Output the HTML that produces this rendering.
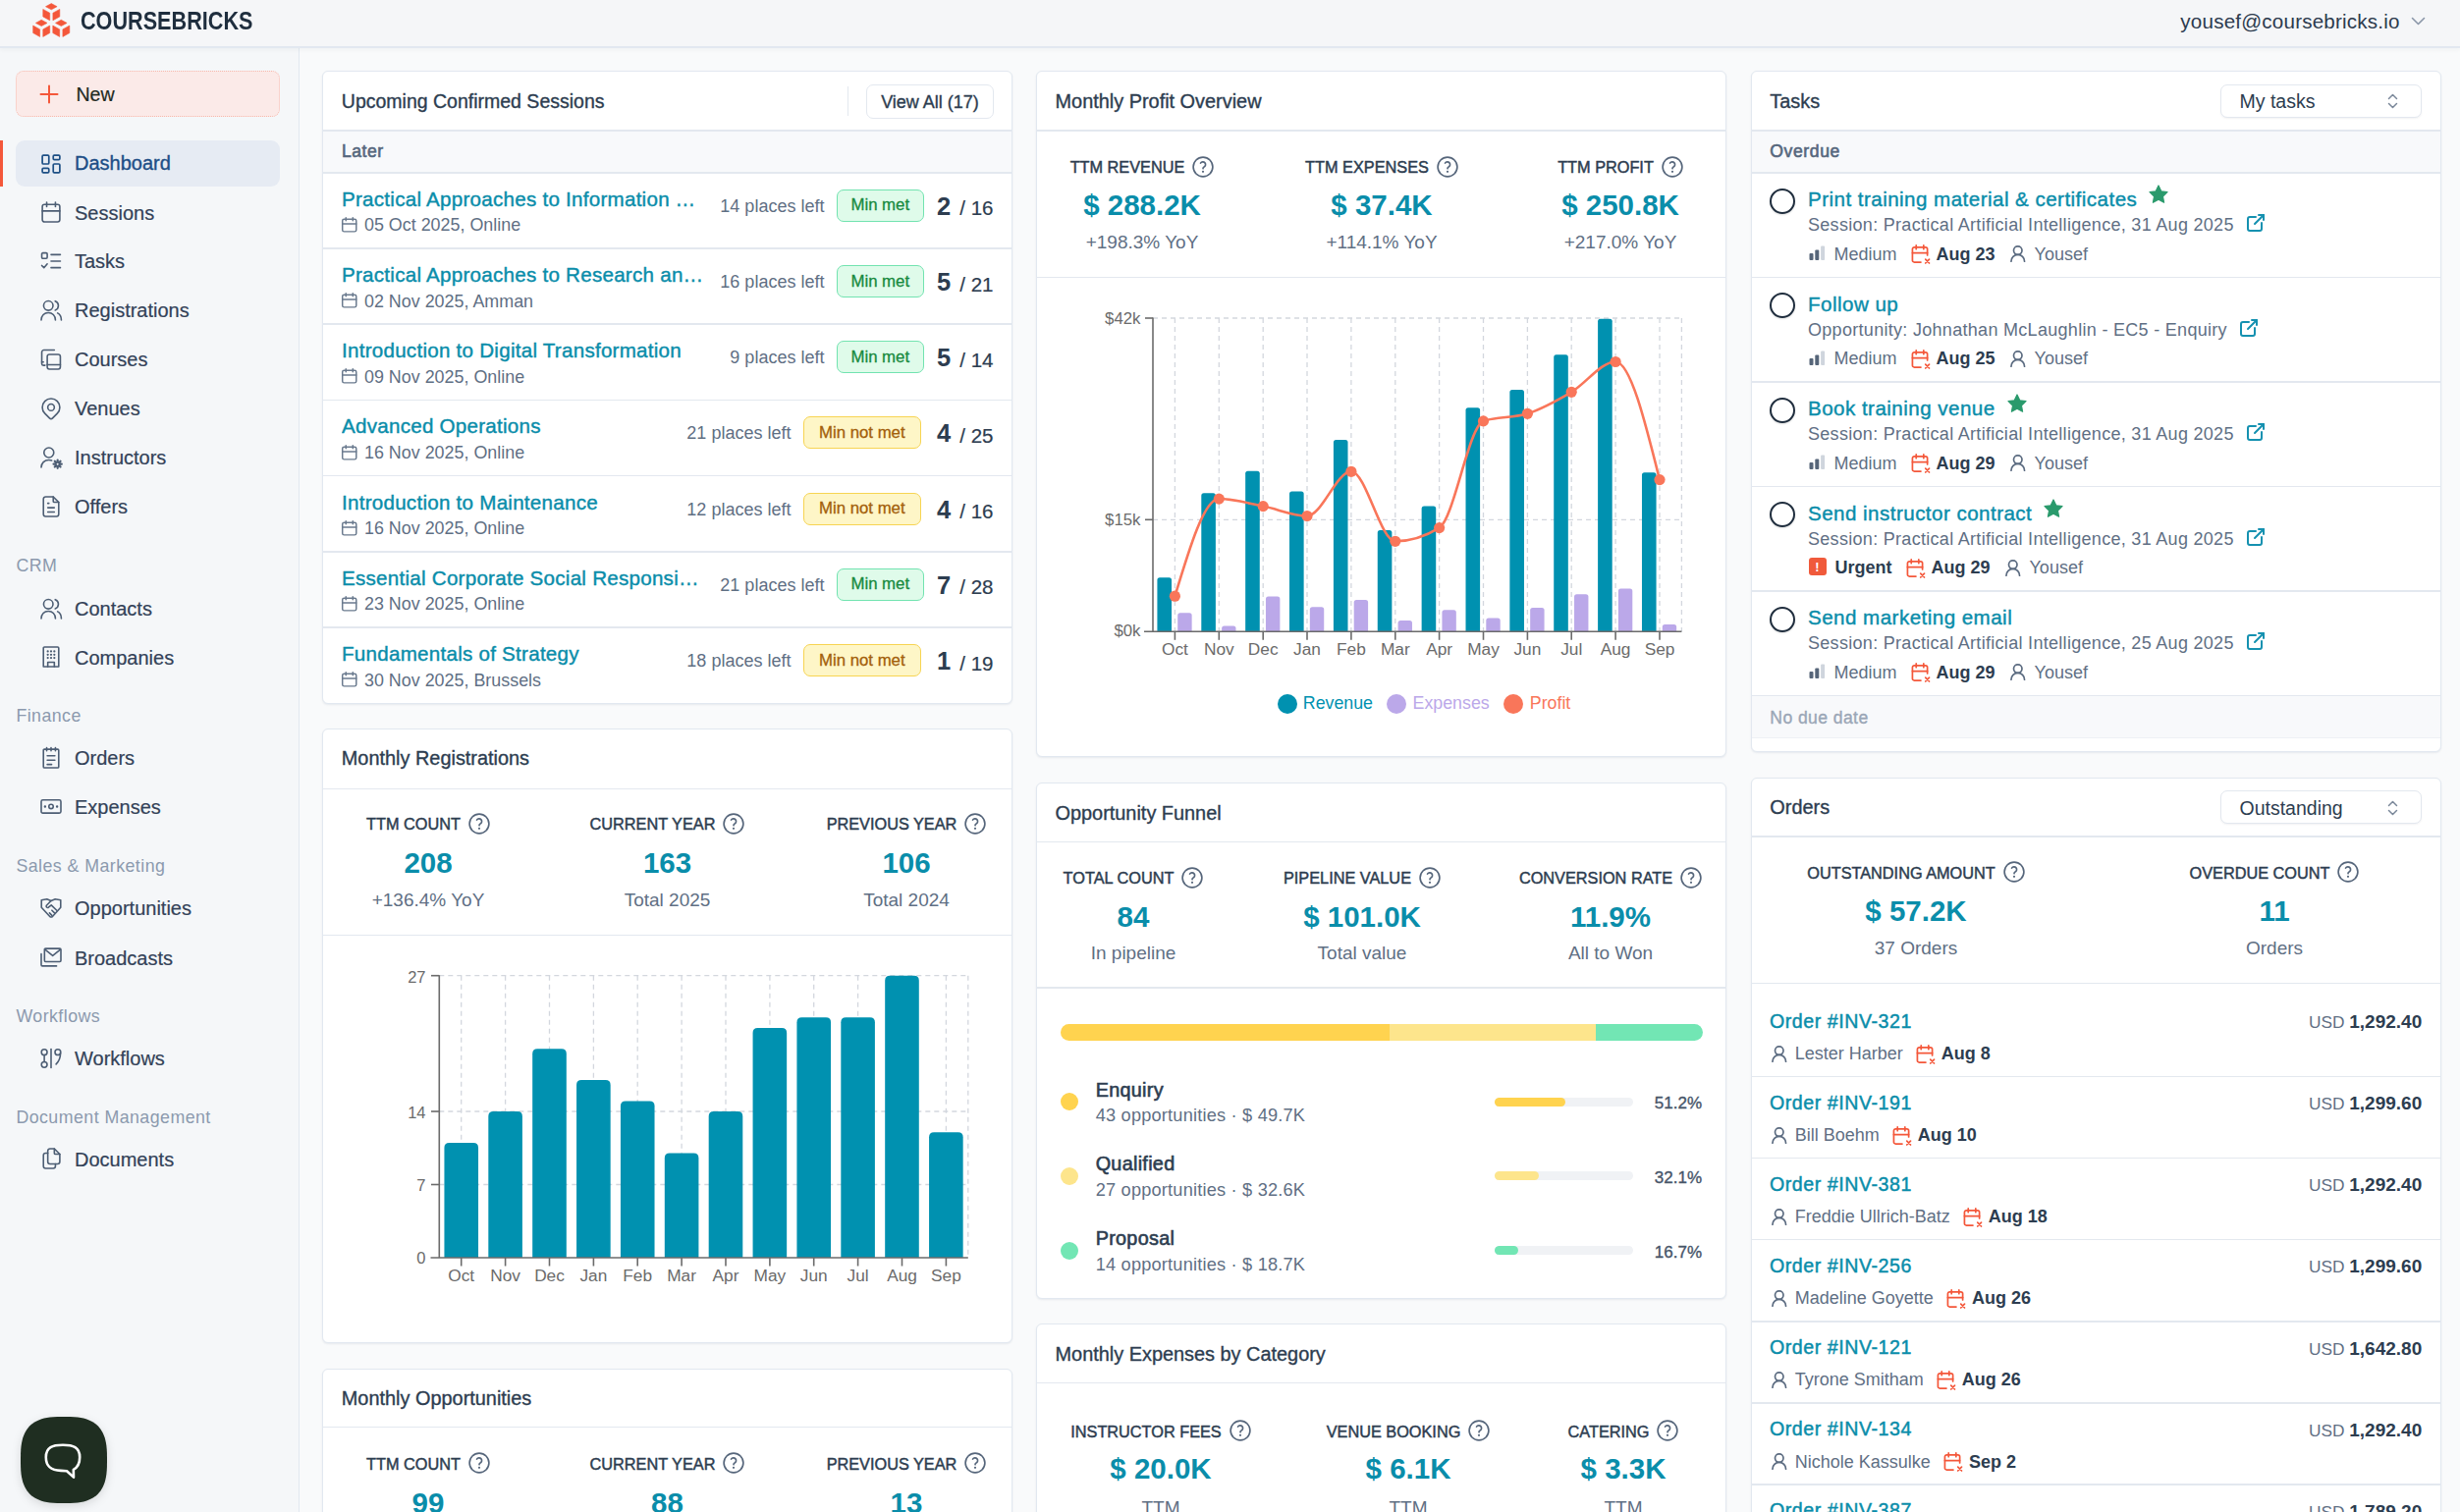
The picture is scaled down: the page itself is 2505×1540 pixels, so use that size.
<!DOCTYPE html><html><head><meta charset="utf-8"><style>
*{box-sizing:border-box;margin:0;padding:0}
html,body{width:2505px;height:1540px;overflow:hidden}
body{position:relative;background:#f9fafb;font-family:"Liberation Sans",sans-serif;color:#334155}
.a{position:absolute}
.t{position:absolute;line-height:1;white-space:nowrap}
svg{overflow:visible}
</style></head><body><div class="a" style="left:0px;top:0px;width:2505px;height:49px;background:#f5f6f8;border-bottom:2px solid #e2e8f0;box-shadow:0 2px 4px rgba(30,41,59,0.04);z-index:5"></div>
<svg class="a" style="left:0;top:0;z-index:6" width="80" height="42"><path d="M52.3,3.6 L58.099999999999994,6.7 L52.3,9.8 L46.5,6.7Z M43.8,9.4 L50.699999999999996,13.2 L50.699999999999996,20.700000000000003 L43.8,16.900000000000002Z M53.9,13.2 L60.8,9.4 L60.8,16.900000000000002 L53.9,20.700000000000003Z" fill="#f4573a" stroke="#f4573a" stroke-width="0.6" stroke-linejoin="round"/><path d="M42.2,20.3 L48.0,23.400000000000002 L42.2,26.5 L36.400000000000006,23.400000000000002Z M33.7,26.1 L40.6,29.9 L40.6,37.400000000000006 L33.7,33.6Z M43.800000000000004,29.9 L50.7,26.1 L50.7,33.6 L43.800000000000004,37.400000000000006Z" fill="#f4573a" stroke="#f4573a" stroke-width="0.6" stroke-linejoin="round"/><path d="M62.3,20.3 L68.1,23.400000000000002 L62.3,26.5 L56.5,23.400000000000002Z M53.8,26.1 L60.699999999999996,29.9 L60.699999999999996,37.400000000000006 L53.8,33.6Z M63.9,29.9 L70.8,26.1 L70.8,33.6 L63.9,37.400000000000006Z" fill="#f4573a" stroke="#f4573a" stroke-width="0.6" stroke-linejoin="round"/></svg>
<div class="t" style="left:82.0px;top:8.2px;font-size:26px;color:#1f2e3e;font-weight:700;transform:scaleX(0.832);transform-origin:0 0;z-index:6;letter-spacing:0px">COURSEBRICKS</div>
<div class="t" style="left:2043.7px;width:400px;text-align:right;top:12.1px;font-size:20.6px;color:#2d3b4e;font-weight:400;z-index:6;letter-spacing:0.2px">yousef@coursebricks.io</div>
<svg class="a" style="left:2455px;top:17px;z-index:6" width="15" height="9" viewBox="0 0 15 9"><path d="M1.5 1.5 L7.5 7.5 L13.5 1.5" fill="none" stroke="#8a96a8" stroke-width="1.6" stroke-linecap="round" stroke-linejoin="round"/></svg>
<div class="a" style="left:0px;top:47px;width:304.5px;height:1493px;background:#f5f7f9;border-right:1.5px solid #e1e8f0"></div>
<div class="a" style="left:16px;top:72px;width:269px;height:47px;background:#fbeae8;border:1.5px dotted #f7b9ad;border-radius:8px"></div>
<svg class="a" style="left:40px;top:86px;" width="20" height="20" viewBox="0 0 20 20"><path d="M10 1.5v17M1.5 10h17" stroke="#f4573a" stroke-width="2" stroke-linecap="round"/></svg>
<div class="t" style="left:77.4px;top:86.6px;font-size:19.6px;color:#1f2a22;font-weight:400;-webkit-text-stroke:0.2px #1f2a22;">New</div>
<div class="a" style="left:0px;top:143px;width:3px;height:47px;background:#f4573a"></div>
<div class="a" style="left:16px;top:143px;width:269px;height:47px;background:#e6ebf3;border-radius:9px"></div>
<svg class="a" style="left:41.5px;top:156.5px" width="20" height="20" viewBox="3 3 18 18" fill="none" stroke="#1d4f85" stroke-width="1.53" stroke-linecap="round" stroke-linejoin="round"><path d="M5 4h4a1 1 0 0 1 1 1v6a1 1 0 0 1 -1 1h-4a1 1 0 0 1 -1 -1v-6a1 1 0 0 1 1 -1"/><path d="M5 16h4a1 1 0 0 1 1 1v2a1 1 0 0 1 -1 1h-4a1 1 0 0 1 -1 -1v-2a1 1 0 0 1 1 -1"/><path d="M15 12h4a1 1 0 0 1 1 1v6a1 1 0 0 1 -1 1h-4a1 1 0 0 1 -1 -1v-6a1 1 0 0 1 1 -1"/><path d="M15 4h4a1 1 0 0 1 1 1v2a1 1 0 0 1 -1 1h-4a1 1 0 0 1 -1 -1v-2a1 1 0 0 1 1 -1"/></svg>
<div class="t" style="left:76.0px;top:156.1px;font-size:20px;color:#1d4e86;font-weight:400;-webkit-text-stroke:0.35px #1d4e86;">Dashboard</div>
<svg class="a" style="left:41.5px;top:206.4px" width="20" height="20" viewBox="3 3 18 18" fill="none" stroke="#4d5e74" stroke-width="1.44" stroke-linecap="round" stroke-linejoin="round"><path d="M4 7a2 2 0 0 1 2 -2h12a2 2 0 0 1 2 2v12a2 2 0 0 1 -2 2h-12a2 2 0 0 1 -2 -2v-12z"/><path d="M16 3v4"/><path d="M8 3v4"/><path d="M4 11h16"/></svg>
<div class="t" style="left:76.0px;top:206.7px;font-size:20px;color:#334258;font-weight:400;-webkit-text-stroke:0.2px #334258;">Sessions</div>
<svg class="a" style="left:41.5px;top:255.7px" width="20" height="20" viewBox="3 3 18 18" fill="none" stroke="#4d5e74" stroke-width="1.44" stroke-linecap="round" stroke-linejoin="round"><path d="M3.5 5.5a1 1 0 0 1 1 -1h3a1 1 0 0 1 1 1v3a1 1 0 0 1 -1 1h-3a1 1 0 0 1 -1 -1z"/><path d="M3.5 16l2 2l3 -3.5"/><path d="M12 6h8.5"/><path d="M12 12h8.5"/><path d="M12 18h8.5"/></svg>
<div class="t" style="left:76.0px;top:256.0px;font-size:20px;color:#334258;font-weight:400;-webkit-text-stroke:0.2px #334258;">Tasks</div>
<svg class="a" style="left:41.5px;top:305.90000000000003px" width="20" height="20" viewBox="3 3 18 18" fill="none" stroke="#4d5e74" stroke-width="1.44" stroke-linecap="round" stroke-linejoin="round"><circle cx="9.5" cy="7.8" r="4.3"/><path d="M3 21c0 -4.2 2.9 -6.8 6.5 -6.8s6.5 2.6 6.5 6.8"/><path d="M15.8 3.6c1.7 .6 2.9 2.2 2.9 4.2s-1.2 3.6 -2.9 4.2"/><path d="M18 14.6c2 1 3.4 3.2 3.4 6.4"/></svg>
<div class="t" style="left:76.0px;top:306.2px;font-size:20px;color:#334258;font-weight:400;-webkit-text-stroke:0.2px #334258;">Registrations</div>
<svg class="a" style="left:41.5px;top:355.8px" width="20" height="20" viewBox="3 3 18 18" fill="none" stroke="#4d5e74" stroke-width="1.44" stroke-linecap="round" stroke-linejoin="round"><path d="M15 3.5h-9.5a2 2 0 0 0 -2 2v10.5a1.5 1.5 0 0 0 1.5 1.5h1.5"/><path d="M3.5 14.5h1.5"/><path d="M10.5 7.5h8a2 2 0 0 1 2 2v9.5a2 2 0 0 1 -2 2h-8a2 2 0 0 1 -2 -2v-9.5a2 2 0 0 1 2 -2z"/><path d="M8.5 17h12"/></svg>
<div class="t" style="left:76.0px;top:356.1px;font-size:20px;color:#334258;font-weight:400;-webkit-text-stroke:0.2px #334258;">Courses</div>
<svg class="a" style="left:41.5px;top:406.0px" width="20" height="20" viewBox="3 3 18 18" fill="none" stroke="#4d5e74" stroke-width="1.44" stroke-linecap="round" stroke-linejoin="round"><path d="M9 11a3 3 0 1 0 6 0a3 3 0 0 0 -6 0"/><path d="M17.657 16.657l-4.243 4.243a2 2 0 0 1 -2.827 0l-4.244 -4.243a8 8 0 1 1 11.314 0z"/></svg>
<div class="t" style="left:76.0px;top:406.3px;font-size:20px;color:#334258;font-weight:400;-webkit-text-stroke:0.2px #334258;">Venues</div>
<svg class="a" style="left:41.5px;top:455.8px" width="20" height="20" viewBox="3 3 18 18" fill="none" stroke="#4d5e74" stroke-width="1.44" stroke-linecap="round" stroke-linejoin="round"><circle cx="10" cy="7.5" r="4.5"/><path d="M3 21c0 -4 3 -6.8 7 -6.8c1 0 1.8 .15 2.6 .45"/><circle cx="18" cy="18" r="1.6"/><path d="M18 14.3v1.2M18 20.5v1.2M21.7 18h-1.2M15.5 18h-1.2M20.6 15.4l-.85 .85M16.25 19.75l-.85 .85M20.6 20.6l-.85 -.85M16.25 16.25l-.85 -.85" stroke-width="2"/></svg>
<div class="t" style="left:76.0px;top:456.1px;font-size:20px;color:#334258;font-weight:400;-webkit-text-stroke:0.2px #334258;">Instructors</div>
<svg class="a" style="left:41.5px;top:506.00000000000006px" width="20" height="20" viewBox="3 3 18 18" fill="none" stroke="#4d5e74" stroke-width="1.44" stroke-linecap="round" stroke-linejoin="round"><path d="M14 3v4a1 1 0 0 0 1 1h4"/><path d="M17 21h-10a2 2 0 0 1 -2 -2v-14a2 2 0 0 1 2 -2h7l5 5v11a2 2 0 0 1 -2 2z"/><path d="M9 9h1"/><path d="M9 13h6"/><path d="M9 17h6"/></svg>
<div class="t" style="left:76.0px;top:506.3px;font-size:20px;color:#334258;font-weight:400;-webkit-text-stroke:0.2px #334258;">Offers</div>
<div class="t" style="left:16.4px;top:567.9px;font-size:17.8px;color:#8c9aae;font-weight:400;letter-spacing:0.45px">CRM</div>
<svg class="a" style="left:41.5px;top:609.8px" width="20" height="20" viewBox="3 3 18 18" fill="none" stroke="#4d5e74" stroke-width="1.44" stroke-linecap="round" stroke-linejoin="round"><circle cx="9.5" cy="7.8" r="4.3"/><path d="M3 21c0 -4.2 2.9 -6.8 6.5 -6.8s6.5 2.6 6.5 6.8"/><path d="M15.8 3.6c1.7 .6 2.9 2.2 2.9 4.2s-1.2 3.6 -2.9 4.2"/><path d="M18 14.6c2 1 3.4 3.2 3.4 6.4"/></svg>
<div class="t" style="left:76.0px;top:610.1px;font-size:20px;color:#334258;font-weight:400;-webkit-text-stroke:0.2px #334258;">Contacts</div>
<svg class="a" style="left:41.5px;top:659.3px" width="20" height="20" viewBox="3 3 18 18" fill="none" stroke="#4d5e74" stroke-width="1.44" stroke-linecap="round" stroke-linejoin="round"><path d="M5 4a1 1 0 0 1 1 -1h12a1 1 0 0 1 1 1v17h-14z"/><path d="M9 21v-4h6v4"/><path d="M9 7h.01M12 7h.01M15 7h.01M9 10h.01M12 10h.01M15 10h.01M9 13h.01M12 13h.01M15 13h.01" stroke-width="2"/></svg>
<div class="t" style="left:76.0px;top:659.6px;font-size:20px;color:#334258;font-weight:400;-webkit-text-stroke:0.2px #334258;">Companies</div>
<div class="t" style="left:16.4px;top:721.4px;font-size:17.8px;color:#8c9aae;font-weight:400;letter-spacing:0.45px">Finance</div>
<svg class="a" style="left:41.5px;top:761.8px" width="20" height="20" viewBox="3 3 18 18" fill="none" stroke="#4d5e74" stroke-width="1.44" stroke-linecap="round" stroke-linejoin="round"><path d="M5 5a1 1 0 0 1 1 -1h12a1 1 0 0 1 1 1v15a1 1 0 0 1 -1 1h-12a1 1 0 0 1 -1 -1z"/><path d="M8 2.5v3M12 2.5v3M16 2.5v3"/><path d="M8.5 10h7M8.5 14h7M8.5 18h4"/></svg>
<div class="t" style="left:76.0px;top:762.1px;font-size:20px;color:#334258;font-weight:400;-webkit-text-stroke:0.2px #334258;">Orders</div>
<svg class="a" style="left:41.5px;top:811.9px" width="20" height="20" viewBox="3 3 18 18" fill="none" stroke="#4d5e74" stroke-width="1.44" stroke-linecap="round" stroke-linejoin="round"><path d="M3 7a1.5 1.5 0 0 1 1.5 -1.5h15a1.5 1.5 0 0 1 1.5 1.5v9a1.5 1.5 0 0 1 -1.5 1.5h-15a1.5 1.5 0 0 1 -1.5 -1.5z"/><circle cx="12" cy="11.5" r="2"/><path d="M6.5 11.5h.01M17.5 11.5h.01" stroke-width="2.2"/></svg>
<div class="t" style="left:76.0px;top:812.2px;font-size:20px;color:#334258;font-weight:400;-webkit-text-stroke:0.2px #334258;">Expenses</div>
<div class="t" style="left:16.4px;top:874.3px;font-size:17.8px;color:#8c9aae;font-weight:400;letter-spacing:0.45px">Sales &amp; Marketing</div>
<svg class="a" style="left:41.5px;top:915.0999999999999px" width="20" height="20" viewBox="3 3 18 18" fill="none" stroke="#4d5e74" stroke-width="1.44" stroke-linecap="round" stroke-linejoin="round"><path d="M3.2 4.5l5 -0.8l3.8 1.6l3.8 -1.6l5 .8v6.8l-7.5 8.3a1.6 1.6 0 0 1 -2.4 0l-7.7 -8.3z"/><path d="M12 5.3l-4.2 4.2a1.3 1.3 0 0 0 1.8 1.8l2.6 -2.1l5 4.8"/><path d="M15.2 16.4l-2.4 -2.4M12.8 18.6l-2.2 -2.2"/></svg>
<div class="t" style="left:76.0px;top:915.4px;font-size:20px;color:#334258;font-weight:400;-webkit-text-stroke:0.2px #334258;">Opportunities</div>
<svg class="a" style="left:41.5px;top:965.3px" width="20" height="20" viewBox="3 3 18 18" fill="none" stroke="#4d5e74" stroke-width="1.44" stroke-linecap="round" stroke-linejoin="round"><path d="M7 4h13a1 1 0 0 1 1 1v10a1 1 0 0 1 -1 1h-13a1 1 0 0 1 -1 -1v-10a1 1 0 0 1 1 -1z"/><path d="M6.5 5l7 5.5l7 -5.5"/><path d="M3 9v10a1 1 0 0 0 1 1h13"/></svg>
<div class="t" style="left:76.0px;top:965.6px;font-size:20px;color:#334258;font-weight:400;-webkit-text-stroke:0.2px #334258;">Broadcasts</div>
<div class="t" style="left:16.4px;top:1026.9px;font-size:17.8px;color:#8c9aae;font-weight:400;letter-spacing:0.45px">Workflows</div>
<svg class="a" style="left:41.5px;top:1068.0px" width="20" height="20" viewBox="3 3 18 18" fill="none" stroke="#4d5e74" stroke-width="1.44" stroke-linecap="round" stroke-linejoin="round"><circle cx="5.8" cy="6.3" r="2.6"/><circle cx="5.8" cy="17.7" r="2.6"/><path d="M5.8 8.9v6.2"/><path d="M12 3.5v17"/><circle cx="18.2" cy="6.3" r="2.6"/><path d="M20.6 7.3c0 4 -1.5 7.5 -4 10"/></svg>
<div class="t" style="left:76.0px;top:1068.3px;font-size:20px;color:#334258;font-weight:400;-webkit-text-stroke:0.2px #334258;">Workflows</div>
<div class="t" style="left:16.4px;top:1130.1px;font-size:17.8px;color:#8c9aae;font-weight:400;letter-spacing:0.45px">Document Management</div>
<svg class="a" style="left:41.5px;top:1170.3999999999999px" width="20" height="20" viewBox="3 3 18 18" fill="none" stroke="#4d5e74" stroke-width="1.44" stroke-linecap="round" stroke-linejoin="round"><path d="M15 3v4a1 1 0 0 0 1 1h4"/><path d="M18 17h-7a2 2 0 0 1 -2 -2v-10a2 2 0 0 1 2 -2h4l5 5v7a2 2 0 0 1 -2 2z"/><path d="M16 17v2a2 2 0 0 1 -2 2h-7a2 2 0 0 1 -2 -2v-10a2 2 0 0 1 2 -2h2"/></svg>
<div class="t" style="left:76.0px;top:1170.7px;font-size:20px;color:#334258;font-weight:400;-webkit-text-stroke:0.2px #334258;">Documents</div>
<svg class="a" style="left:21px;top:1443px;filter:drop-shadow(0 3px 5px rgba(0,0,0,0.12))" width="88" height="88" viewBox="0 0 88 88"><path d="M88.00,44.00 L87.94,50.71 L87.74,54.80 L87.42,58.25 L86.96,61.32 L86.38,64.12 L85.66,66.69 L84.82,69.07 L83.84,71.28 L82.74,73.34 L81.51,75.25 L80.14,77.01 L78.65,78.65 L77.01,80.14 L75.25,81.51 L73.34,82.74 L71.28,83.84 L69.07,84.82 L66.69,85.66 L64.12,86.38 L61.32,86.96 L58.25,87.42 L54.80,87.74 L50.71,87.94 L44.00,88.00 L37.29,87.94 L33.20,87.74 L29.75,87.42 L26.68,86.96 L23.88,86.38 L21.31,85.66 L18.93,84.82 L16.72,83.84 L14.66,82.74 L12.75,81.51 L10.99,80.14 L9.35,78.65 L7.86,77.01 L6.49,75.25 L5.26,73.34 L4.16,71.28 L3.18,69.07 L2.34,66.69 L1.62,64.12 L1.04,61.32 L0.58,58.25 L0.26,54.80 L0.06,50.71 L0.00,44.00 L0.06,37.29 L0.26,33.20 L0.58,29.75 L1.04,26.68 L1.62,23.88 L2.34,21.31 L3.18,18.93 L4.16,16.72 L5.26,14.66 L6.49,12.75 L7.86,10.99 L9.35,9.35 L10.99,7.86 L12.75,6.49 L14.66,5.26 L16.72,4.16 L18.93,3.18 L21.31,2.34 L23.88,1.62 L26.68,1.04 L29.75,0.58 L33.20,0.26 L37.29,0.06 L44.00,0.00 L50.71,0.06 L54.80,0.26 L58.25,0.58 L61.32,1.04 L64.12,1.62 L66.69,2.34 L69.07,3.18 L71.28,4.16 L73.34,5.26 L75.25,6.49 L77.01,7.86 L78.65,9.35 L80.14,10.99 L81.51,12.75 L82.74,14.66 L83.84,16.72 L84.82,18.93 L85.66,21.31 L86.38,23.88 L86.96,26.68 L87.42,29.75 L87.74,33.20 L87.94,37.29Z" fill="#1f2e21"/></svg>
<svg class="a" style="left:45px;top:1470px;" width="38" height="38" viewBox="0 0 38 38"><path d="M19 1.8C8.5 1.8 1.8 3.8 1.8 14.2C1.8 23.8 7 27.4 17 27.9L23 28.2L30 34.6L29.8 26.8C34.3 24.4 36.2 21 36.2 14.2C36.2 3.8 29.5 1.8 19 1.8Z" fill="none" stroke="#fff" stroke-width="2.6" stroke-linejoin="round"/></svg>
<div class="a" style="left:328px;top:72px;width:703px;height:645px;background:#fff;border:1.5px solid #e2e8f0;border-radius:6px;box-shadow:0 1px 2px rgba(100,116,139,0.12)"></div>
<div class="t" style="left:347.8px;top:93.8px;font-size:19.5px;color:#2d3d50;font-weight:400;-webkit-text-stroke:0.35px #2d3d50;">Upcoming Confirmed Sessions</div>
<div class="a" style="left:863px;top:88px;width:1px;height:30px;background:#e3e8ef"></div>
<div class="a" style="left:882px;top:86px;width:130px;height:35px;background:#fff;border:1.5px solid #e3e8ef;border-radius:7px"></div>
<div class="t" style="left:882.0px;width:130px;text-align:center;top:94.5px;font-size:18px;color:#2d3d50;font-weight:400;-webkit-text-stroke:0.35px #2d3d50;">View All (17)</div>
<div class="a" style="left:329px;top:132.3px;width:701px;height:1.5px;background:#e3e8ef"></div>
<div class="a" style="left:329px;top:133.8px;width:701px;height:42px;background:#f8f9fb"></div>
<div class="t" style="left:348.0px;top:146.3px;font-size:17.6px;color:#56677d;font-weight:400;-webkit-text-stroke:0.6px #56677d;letter-spacing:0.5px">Later</div>
<div class="a" style="left:329px;top:175px;width:701px;height:1.5px;background:#e3e8ef"></div>
<div class="t" style="left:348.0px;top:192.8px;font-size:20.6px;color:#0a8daa;font-weight:400;-webkit-text-stroke:0.4px #0a8daa;letter-spacing:0.25px;width:370px;overflow:hidden;text-overflow:ellipsis;padding-bottom:5px">Practical Approaches to Information Technology</div>
<svg class="a" style="left:348px;top:221.0px" width="15.5" height="15.5" viewBox="3.2 2.2 17.6 19.6" preserveAspectRatio="none" fill="none" stroke="#6a7a8e" stroke-width="1.7" stroke-linecap="round" stroke-linejoin="round"><path d="M4 7a2 2 0 0 1 2 -2h12a2 2 0 0 1 2 2v12a2 2 0 0 1 -2 2h-12a2 2 0 0 1 -2 -2v-12z"/><path d="M16 3v4"/><path d="M8 3v4"/><path d="M4 11h16"/></svg>
<div class="t" style="left:371.0px;top:221.4px;font-size:17.9px;color:#5f6f84;font-weight:400;">05 Oct 2025, Online</div>
<div class="a" style="left:329px;top:252.2px;width:701px;height:1.5px;background:#e3e8ef"></div>
<div class="a" style="right:1493.5px;top:192.8px;height:33px;display:flex;align-items:center;white-space:nowrap"><span style="font-size:18px;color:#5f6f84;margin-right:12.5px;position:relative;top:1px">14 places left</span><span style="display:inline-flex;align-items:center;justify-content:center;height:33px;padding:0 13.5px;border:1.5px solid #72e3b0;background:#dffbea;border-radius:7px;font-size:16.8px;color:#178a3e;-webkit-text-stroke:0.3px #178a3e">Min met</span><span style="margin-left:13.5px;font-size:25.5px;font-weight:700;color:#2d3d50;position:relative;top:1px">2</span><span style="font-size:20.5px;color:#2d3d50;margin-left:9px;position:relative;top:3px;-webkit-text-stroke:0.2px #2d3d50">/ 16</span></div>
<div class="t" style="left:348.0px;top:270.0px;font-size:20.6px;color:#0a8daa;font-weight:400;-webkit-text-stroke:0.4px #0a8daa;letter-spacing:0.25px;width:370px;overflow:hidden;text-overflow:ellipsis;padding-bottom:5px">Practical Approaches to Research and Development</div>
<svg class="a" style="left:348px;top:298.2px" width="15.5" height="15.5" viewBox="3.2 2.2 17.6 19.6" preserveAspectRatio="none" fill="none" stroke="#6a7a8e" stroke-width="1.7" stroke-linecap="round" stroke-linejoin="round"><path d="M4 7a2 2 0 0 1 2 -2h12a2 2 0 0 1 2 2v12a2 2 0 0 1 -2 2h-12a2 2 0 0 1 -2 -2v-12z"/><path d="M16 3v4"/><path d="M8 3v4"/><path d="M4 11h16"/></svg>
<div class="t" style="left:371.0px;top:298.6px;font-size:17.9px;color:#5f6f84;font-weight:400;">02 Nov 2025, Amman</div>
<div class="a" style="left:329px;top:329.4px;width:701px;height:1.5px;background:#e3e8ef"></div>
<div class="a" style="right:1493.5px;top:270.0px;height:33px;display:flex;align-items:center;white-space:nowrap"><span style="font-size:18px;color:#5f6f84;margin-right:12.5px;position:relative;top:1px">16 places left</span><span style="display:inline-flex;align-items:center;justify-content:center;height:33px;padding:0 13.5px;border:1.5px solid #72e3b0;background:#dffbea;border-radius:7px;font-size:16.8px;color:#178a3e;-webkit-text-stroke:0.3px #178a3e">Min met</span><span style="margin-left:13.5px;font-size:25.5px;font-weight:700;color:#2d3d50;position:relative;top:1px">5</span><span style="font-size:20.5px;color:#2d3d50;margin-left:9px;position:relative;top:3px;-webkit-text-stroke:0.2px #2d3d50">/ 21</span></div>
<div class="t" style="left:348.0px;top:347.2px;font-size:20.6px;color:#0a8daa;font-weight:400;-webkit-text-stroke:0.4px #0a8daa;letter-spacing:0.25px;width:370px;overflow:hidden;text-overflow:ellipsis;padding-bottom:5px">Introduction to Digital Transformation</div>
<svg class="a" style="left:348px;top:375.4px" width="15.5" height="15.5" viewBox="3.2 2.2 17.6 19.6" preserveAspectRatio="none" fill="none" stroke="#6a7a8e" stroke-width="1.7" stroke-linecap="round" stroke-linejoin="round"><path d="M4 7a2 2 0 0 1 2 -2h12a2 2 0 0 1 2 2v12a2 2 0 0 1 -2 2h-12a2 2 0 0 1 -2 -2v-12z"/><path d="M16 3v4"/><path d="M8 3v4"/><path d="M4 11h16"/></svg>
<div class="t" style="left:371.0px;top:375.8px;font-size:17.9px;color:#5f6f84;font-weight:400;">09 Nov 2025, Online</div>
<div class="a" style="left:329px;top:406.59999999999997px;width:701px;height:1.5px;background:#e3e8ef"></div>
<div class="a" style="right:1493.5px;top:347.2px;height:33px;display:flex;align-items:center;white-space:nowrap"><span style="font-size:18px;color:#5f6f84;margin-right:12.5px;position:relative;top:1px">9 places left</span><span style="display:inline-flex;align-items:center;justify-content:center;height:33px;padding:0 13.5px;border:1.5px solid #72e3b0;background:#dffbea;border-radius:7px;font-size:16.8px;color:#178a3e;-webkit-text-stroke:0.3px #178a3e">Min met</span><span style="margin-left:13.5px;font-size:25.5px;font-weight:700;color:#2d3d50;position:relative;top:1px">5</span><span style="font-size:20.5px;color:#2d3d50;margin-left:9px;position:relative;top:3px;-webkit-text-stroke:0.2px #2d3d50">/ 14</span></div>
<div class="t" style="left:348.0px;top:424.4px;font-size:20.6px;color:#0a8daa;font-weight:400;-webkit-text-stroke:0.4px #0a8daa;letter-spacing:0.25px;width:370px;overflow:hidden;text-overflow:ellipsis;padding-bottom:5px">Advanced Operations</div>
<svg class="a" style="left:348px;top:452.6px" width="15.5" height="15.5" viewBox="3.2 2.2 17.6 19.6" preserveAspectRatio="none" fill="none" stroke="#6a7a8e" stroke-width="1.7" stroke-linecap="round" stroke-linejoin="round"><path d="M4 7a2 2 0 0 1 2 -2h12a2 2 0 0 1 2 2v12a2 2 0 0 1 -2 2h-12a2 2 0 0 1 -2 -2v-12z"/><path d="M16 3v4"/><path d="M8 3v4"/><path d="M4 11h16"/></svg>
<div class="t" style="left:371.0px;top:453.0px;font-size:17.9px;color:#5f6f84;font-weight:400;">16 Nov 2025, Online</div>
<div class="a" style="left:329px;top:483.8px;width:701px;height:1.5px;background:#e3e8ef"></div>
<div class="a" style="right:1493.5px;top:424.4px;height:33px;display:flex;align-items:center;white-space:nowrap"><span style="font-size:18px;color:#5f6f84;margin-right:12.5px;position:relative;top:1px">21 places left</span><span style="display:inline-flex;align-items:center;justify-content:center;height:33px;padding:0 15px;border:1.5px solid #f7d452;background:#fef6c7;border-radius:7px;font-size:16.8px;color:#a35f0b;-webkit-text-stroke:0.3px #a35f0b">Min not met</span><span style="margin-left:16.5px;font-size:25.5px;font-weight:700;color:#2d3d50;position:relative;top:1px">4</span><span style="font-size:20.5px;color:#2d3d50;margin-left:9px;position:relative;top:3px;-webkit-text-stroke:0.2px #2d3d50">/ 25</span></div>
<div class="t" style="left:348.0px;top:501.6px;font-size:20.6px;color:#0a8daa;font-weight:400;-webkit-text-stroke:0.4px #0a8daa;letter-spacing:0.25px;width:370px;overflow:hidden;text-overflow:ellipsis;padding-bottom:5px">Introduction to Maintenance</div>
<svg class="a" style="left:348px;top:529.8px" width="15.5" height="15.5" viewBox="3.2 2.2 17.6 19.6" preserveAspectRatio="none" fill="none" stroke="#6a7a8e" stroke-width="1.7" stroke-linecap="round" stroke-linejoin="round"><path d="M4 7a2 2 0 0 1 2 -2h12a2 2 0 0 1 2 2v12a2 2 0 0 1 -2 2h-12a2 2 0 0 1 -2 -2v-12z"/><path d="M16 3v4"/><path d="M8 3v4"/><path d="M4 11h16"/></svg>
<div class="t" style="left:371.0px;top:530.2px;font-size:17.9px;color:#5f6f84;font-weight:400;">16 Nov 2025, Online</div>
<div class="a" style="left:329px;top:561.0px;width:701px;height:1.5px;background:#e3e8ef"></div>
<div class="a" style="right:1493.5px;top:501.6px;height:33px;display:flex;align-items:center;white-space:nowrap"><span style="font-size:18px;color:#5f6f84;margin-right:12.5px;position:relative;top:1px">12 places left</span><span style="display:inline-flex;align-items:center;justify-content:center;height:33px;padding:0 15px;border:1.5px solid #f7d452;background:#fef6c7;border-radius:7px;font-size:16.8px;color:#a35f0b;-webkit-text-stroke:0.3px #a35f0b">Min not met</span><span style="margin-left:16.5px;font-size:25.5px;font-weight:700;color:#2d3d50;position:relative;top:1px">4</span><span style="font-size:20.5px;color:#2d3d50;margin-left:9px;position:relative;top:3px;-webkit-text-stroke:0.2px #2d3d50">/ 16</span></div>
<div class="t" style="left:348.0px;top:578.8px;font-size:20.6px;color:#0a8daa;font-weight:400;-webkit-text-stroke:0.4px #0a8daa;letter-spacing:0.25px;width:370px;overflow:hidden;text-overflow:ellipsis;padding-bottom:5px">Essential Corporate Social Responsibility</div>
<svg class="a" style="left:348px;top:607.0px" width="15.5" height="15.5" viewBox="3.2 2.2 17.6 19.6" preserveAspectRatio="none" fill="none" stroke="#6a7a8e" stroke-width="1.7" stroke-linecap="round" stroke-linejoin="round"><path d="M4 7a2 2 0 0 1 2 -2h12a2 2 0 0 1 2 2v12a2 2 0 0 1 -2 2h-12a2 2 0 0 1 -2 -2v-12z"/><path d="M16 3v4"/><path d="M8 3v4"/><path d="M4 11h16"/></svg>
<div class="t" style="left:371.0px;top:607.4px;font-size:17.9px;color:#5f6f84;font-weight:400;">23 Nov 2025, Online</div>
<div class="a" style="left:329px;top:638.2px;width:701px;height:1.5px;background:#e3e8ef"></div>
<div class="a" style="right:1493.5px;top:578.8px;height:33px;display:flex;align-items:center;white-space:nowrap"><span style="font-size:18px;color:#5f6f84;margin-right:12.5px;position:relative;top:1px">21 places left</span><span style="display:inline-flex;align-items:center;justify-content:center;height:33px;padding:0 13.5px;border:1.5px solid #72e3b0;background:#dffbea;border-radius:7px;font-size:16.8px;color:#178a3e;-webkit-text-stroke:0.3px #178a3e">Min met</span><span style="margin-left:13.5px;font-size:25.5px;font-weight:700;color:#2d3d50;position:relative;top:1px">7</span><span style="font-size:20.5px;color:#2d3d50;margin-left:9px;position:relative;top:3px;-webkit-text-stroke:0.2px #2d3d50">/ 28</span></div>
<div class="t" style="left:348.0px;top:656.0px;font-size:20.6px;color:#0a8daa;font-weight:400;-webkit-text-stroke:0.4px #0a8daa;letter-spacing:0.25px;width:370px;overflow:hidden;text-overflow:ellipsis;padding-bottom:5px">Fundamentals of Strategy</div>
<svg class="a" style="left:348px;top:684.2px" width="15.5" height="15.5" viewBox="3.2 2.2 17.6 19.6" preserveAspectRatio="none" fill="none" stroke="#6a7a8e" stroke-width="1.7" stroke-linecap="round" stroke-linejoin="round"><path d="M4 7a2 2 0 0 1 2 -2h12a2 2 0 0 1 2 2v12a2 2 0 0 1 -2 2h-12a2 2 0 0 1 -2 -2v-12z"/><path d="M16 3v4"/><path d="M8 3v4"/><path d="M4 11h16"/></svg>
<div class="t" style="left:371.0px;top:684.6px;font-size:17.9px;color:#5f6f84;font-weight:400;">30 Nov 2025, Brussels</div>
<div class="a" style="right:1493.5px;top:656.0px;height:33px;display:flex;align-items:center;white-space:nowrap"><span style="font-size:18px;color:#5f6f84;margin-right:12.5px;position:relative;top:1px">18 places left</span><span style="display:inline-flex;align-items:center;justify-content:center;height:33px;padding:0 15px;border:1.5px solid #f7d452;background:#fef6c7;border-radius:7px;font-size:16.8px;color:#a35f0b;-webkit-text-stroke:0.3px #a35f0b">Min not met</span><span style="margin-left:16.5px;font-size:25.5px;font-weight:700;color:#2d3d50;position:relative;top:1px">1</span><span style="font-size:20.5px;color:#2d3d50;margin-left:9px;position:relative;top:3px;-webkit-text-stroke:0.2px #2d3d50">/ 19</span></div>
<div class="a" style="left:328px;top:742px;width:703px;height:626px;background:#fff;border:1.5px solid #e2e8f0;border-radius:6px;box-shadow:0 1px 2px rgba(100,116,139,0.12)"></div>
<div class="t" style="left:347.8px;top:763.4px;font-size:19.9px;color:#2d3d50;font-weight:400;-webkit-text-stroke:0.35px #2d3d50;">Monthly Registrations</div>
<div class="a" style="left:329px;top:802.5px;width:701px;height:1.5px;background:#e3e8ef"></div>
<div class="a" style="left:186px;width:500px;top:831.3px;height:16.3px;display:flex;justify-content:center;align-items:center;white-space:nowrap;line-height:1"><span style="font-size:16.3px;letter-spacing:0px;color:#2d3d50;-webkit-text-stroke:0.45px #2d3d50">TTM COUNT</span><svg width="22" height="22" viewBox="0 0 24 24" style="margin-left:8px;position:relative;top:-0.5px;flex:none" fill="none" stroke="#56667b" stroke-width="1.8" stroke-linecap="round" stroke-linejoin="round"><circle cx="12" cy="12" r="10.8"/><path d="M12 17.3v.01" stroke-width="2.4"/><path d="M12 13.9a1.9 1.9 0 0 1 0.9 -1.7a3 3 0 1 0 -3.6 -4.4"/></svg></div>
<div class="t" style="left:236.0px;width:400px;text-align:center;top:864.0px;font-size:29.5px;color:#0a8daa;font-weight:700;">208</div>
<div class="t" style="left:236.0px;width:400px;text-align:center;top:907.1px;font-size:19px;color:#5f6f84;font-weight:400;">+136.4% YoY</div>
<div class="a" style="left:429.5px;width:500px;top:831.3px;height:16.3px;display:flex;justify-content:center;align-items:center;white-space:nowrap;line-height:1"><span style="font-size:16.3px;letter-spacing:0px;color:#2d3d50;-webkit-text-stroke:0.45px #2d3d50">CURRENT YEAR</span><svg width="22" height="22" viewBox="0 0 24 24" style="margin-left:8px;position:relative;top:-0.5px;flex:none" fill="none" stroke="#56667b" stroke-width="1.8" stroke-linecap="round" stroke-linejoin="round"><circle cx="12" cy="12" r="10.8"/><path d="M12 17.3v.01" stroke-width="2.4"/><path d="M12 13.9a1.9 1.9 0 0 1 0.9 -1.7a3 3 0 1 0 -3.6 -4.4"/></svg></div>
<div class="t" style="left:479.5px;width:400px;text-align:center;top:864.0px;font-size:29.5px;color:#0a8daa;font-weight:700;">163</div>
<div class="t" style="left:479.5px;width:400px;text-align:center;top:907.1px;font-size:19px;color:#5f6f84;font-weight:400;">Total 2025</div>
<div class="a" style="left:673px;width:500px;top:831.3px;height:16.3px;display:flex;justify-content:center;align-items:center;white-space:nowrap;line-height:1"><span style="font-size:16.3px;letter-spacing:0px;color:#2d3d50;-webkit-text-stroke:0.45px #2d3d50">PREVIOUS YEAR</span><svg width="22" height="22" viewBox="0 0 24 24" style="margin-left:8px;position:relative;top:-0.5px;flex:none" fill="none" stroke="#56667b" stroke-width="1.8" stroke-linecap="round" stroke-linejoin="round"><circle cx="12" cy="12" r="10.8"/><path d="M12 17.3v.01" stroke-width="2.4"/><path d="M12 13.9a1.9 1.9 0 0 1 0.9 -1.7a3 3 0 1 0 -3.6 -4.4"/></svg></div>
<div class="t" style="left:723.0px;width:400px;text-align:center;top:864.0px;font-size:29.5px;color:#0a8daa;font-weight:700;">106</div>
<div class="t" style="left:723.0px;width:400px;text-align:center;top:907.1px;font-size:19px;color:#5f6f84;font-weight:400;">Total 2024</div>
<div class="a" style="left:329px;top:951.7px;width:701px;height:1.5px;background:#e3e8ef"></div>
<svg class="a" style="left:0;top:0" width="2505" height="1540"><line x1="447.3" y1="993.7" x2="985.8" y2="993.7" stroke="#d3d7de" stroke-width="1.3" stroke-dasharray="5 4"/><line x1="447.3" y1="1132.0" x2="985.8" y2="1132.0" stroke="#d3d7de" stroke-width="1.3" stroke-dasharray="5 4"/><line x1="447.3" y1="1206.5" x2="985.8" y2="1206.5" stroke="#d3d7de" stroke-width="1.3" stroke-dasharray="5 4"/><line x1="469.7" y1="993.7" x2="469.7" y2="1281" stroke="#d3d7de" stroke-width="1.3" stroke-dasharray="5 4"/><line x1="514.6" y1="993.7" x2="514.6" y2="1281" stroke="#d3d7de" stroke-width="1.3" stroke-dasharray="5 4"/><line x1="559.5" y1="993.7" x2="559.5" y2="1281" stroke="#d3d7de" stroke-width="1.3" stroke-dasharray="5 4"/><line x1="604.4" y1="993.7" x2="604.4" y2="1281" stroke="#d3d7de" stroke-width="1.3" stroke-dasharray="5 4"/><line x1="649.2" y1="993.7" x2="649.2" y2="1281" stroke="#d3d7de" stroke-width="1.3" stroke-dasharray="5 4"/><line x1="694.1" y1="993.7" x2="694.1" y2="1281" stroke="#d3d7de" stroke-width="1.3" stroke-dasharray="5 4"/><line x1="739.0" y1="993.7" x2="739.0" y2="1281" stroke="#d3d7de" stroke-width="1.3" stroke-dasharray="5 4"/><line x1="783.9" y1="993.7" x2="783.9" y2="1281" stroke="#d3d7de" stroke-width="1.3" stroke-dasharray="5 4"/><line x1="828.7" y1="993.7" x2="828.7" y2="1281" stroke="#d3d7de" stroke-width="1.3" stroke-dasharray="5 4"/><line x1="873.6" y1="993.7" x2="873.6" y2="1281" stroke="#d3d7de" stroke-width="1.3" stroke-dasharray="5 4"/><line x1="918.5" y1="993.7" x2="918.5" y2="1281" stroke="#d3d7de" stroke-width="1.3" stroke-dasharray="5 4"/><line x1="963.4" y1="993.7" x2="963.4" y2="1281" stroke="#d3d7de" stroke-width="1.3" stroke-dasharray="5 4"/><line x1="985.8" y1="993.7" x2="985.8" y2="1281" stroke="#d3d7de" stroke-width="1.3" stroke-dasharray="5 4"/><path d="M452.44,1281.00 L452.44,1168.95 Q452.44,1163.95 457.44,1163.95 L482.04,1163.95 Q487.04,1163.95 487.04,1168.95 L487.04,1281.00Z" fill="#0091b0"/><path d="M497.31,1281.00 L497.31,1137.03 Q497.31,1132.03 502.31,1132.03 L526.91,1132.03 Q531.91,1132.03 531.91,1137.03 L531.91,1281.00Z" fill="#0091b0"/><path d="M542.19,1281.00 L542.19,1073.19 Q542.19,1068.19 547.19,1068.19 L571.79,1068.19 Q576.79,1068.19 576.79,1073.19 L576.79,1281.00Z" fill="#0091b0"/><path d="M587.06,1281.00 L587.06,1105.11 Q587.06,1100.11 592.06,1100.11 L616.66,1100.11 Q621.66,1100.11 621.66,1105.11 L621.66,1281.00Z" fill="#0091b0"/><path d="M631.94,1281.00 L631.94,1126.39 Q631.94,1121.39 636.94,1121.39 L661.54,1121.39 Q666.54,1121.39 666.54,1126.39 L666.54,1281.00Z" fill="#0091b0"/><path d="M676.81,1281.00 L676.81,1179.59 Q676.81,1174.59 681.81,1174.59 L706.41,1174.59 Q711.41,1174.59 711.41,1179.59 L711.41,1281.00Z" fill="#0091b0"/><path d="M721.69,1281.00 L721.69,1137.03 Q721.69,1132.03 726.69,1132.03 L751.29,1132.03 Q756.29,1132.03 756.29,1137.03 L756.29,1281.00Z" fill="#0091b0"/><path d="M766.56,1281.00 L766.56,1051.90 Q766.56,1046.90 771.56,1046.90 L796.16,1046.90 Q801.16,1046.90 801.16,1051.90 L801.16,1281.00Z" fill="#0091b0"/><path d="M811.44,1281.00 L811.44,1041.26 Q811.44,1036.26 816.44,1036.26 L841.04,1036.26 Q846.04,1036.26 846.04,1041.26 L846.04,1281.00Z" fill="#0091b0"/><path d="M856.31,1281.00 L856.31,1041.26 Q856.31,1036.26 861.31,1036.26 L885.91,1036.26 Q890.91,1036.26 890.91,1041.26 L890.91,1281.00Z" fill="#0091b0"/><path d="M901.19,1281.00 L901.19,998.70 Q901.19,993.70 906.19,993.70 L930.79,993.70 Q935.79,993.70 935.79,998.70 L935.79,1281.00Z" fill="#0091b0"/><path d="M946.06,1281.00 L946.06,1158.31 Q946.06,1153.31 951.06,1153.31 L975.66,1153.31 Q980.66,1153.31 980.66,1158.31 L980.66,1281.00Z" fill="#0091b0"/><line x1="447.3" y1="993.2" x2="447.3" y2="1281" stroke="#6b6b6b" stroke-width="1.6"/><line x1="438.5" y1="1281" x2="985.8" y2="1281" stroke="#6b6b6b" stroke-width="1.6"/><line x1="439" y1="993.7" x2="447.3" y2="993.7" stroke="#6b6b6b" stroke-width="1.6"/><line x1="439" y1="1132.0" x2="447.3" y2="1132.0" stroke="#6b6b6b" stroke-width="1.6"/><line x1="439" y1="1206.5" x2="447.3" y2="1206.5" stroke="#6b6b6b" stroke-width="1.6"/><line x1="469.7" y1="1281" x2="469.7" y2="1289.5" stroke="#6b6b6b" stroke-width="1.6"/><line x1="514.6" y1="1281" x2="514.6" y2="1289.5" stroke="#6b6b6b" stroke-width="1.6"/><line x1="559.5" y1="1281" x2="559.5" y2="1289.5" stroke="#6b6b6b" stroke-width="1.6"/><line x1="604.4" y1="1281" x2="604.4" y2="1289.5" stroke="#6b6b6b" stroke-width="1.6"/><line x1="649.2" y1="1281" x2="649.2" y2="1289.5" stroke="#6b6b6b" stroke-width="1.6"/><line x1="694.1" y1="1281" x2="694.1" y2="1289.5" stroke="#6b6b6b" stroke-width="1.6"/><line x1="739.0" y1="1281" x2="739.0" y2="1289.5" stroke="#6b6b6b" stroke-width="1.6"/><line x1="783.9" y1="1281" x2="783.9" y2="1289.5" stroke="#6b6b6b" stroke-width="1.6"/><line x1="828.7" y1="1281" x2="828.7" y2="1289.5" stroke="#6b6b6b" stroke-width="1.6"/><line x1="873.6" y1="1281" x2="873.6" y2="1289.5" stroke="#6b6b6b" stroke-width="1.6"/><line x1="918.5" y1="1281" x2="918.5" y2="1289.5" stroke="#6b6b6b" stroke-width="1.6"/><line x1="963.4" y1="1281" x2="963.4" y2="1289.5" stroke="#6b6b6b" stroke-width="1.6"/></svg>
<div class="t" style="left:373.5px;width:60px;text-align:right;top:987.0px;font-size:16.5px;color:#6b6b6b;font-weight:400;">27</div>
<div class="t" style="left:373.5px;width:60px;text-align:right;top:1124.5px;font-size:16.5px;color:#6b6b6b;font-weight:400;">14</div>
<div class="t" style="left:373.5px;width:60px;text-align:right;top:1199.0px;font-size:16.5px;color:#6b6b6b;font-weight:400;">7</div>
<div class="t" style="left:373.5px;width:60px;text-align:right;top:1273.2px;font-size:16.5px;color:#6b6b6b;font-weight:400;">0</div>
<div class="t" style="left:439.7px;width:60px;text-align:center;top:1290.7px;font-size:17.3px;color:#6b6b6b;font-weight:400;">Oct</div>
<div class="t" style="left:484.6px;width:60px;text-align:center;top:1290.7px;font-size:17.3px;color:#6b6b6b;font-weight:400;">Nov</div>
<div class="t" style="left:529.5px;width:60px;text-align:center;top:1290.7px;font-size:17.3px;color:#6b6b6b;font-weight:400;">Dec</div>
<div class="t" style="left:574.4px;width:60px;text-align:center;top:1290.7px;font-size:17.3px;color:#6b6b6b;font-weight:400;">Jan</div>
<div class="t" style="left:619.2px;width:60px;text-align:center;top:1290.7px;font-size:17.3px;color:#6b6b6b;font-weight:400;">Feb</div>
<div class="t" style="left:664.1px;width:60px;text-align:center;top:1290.7px;font-size:17.3px;color:#6b6b6b;font-weight:400;">Mar</div>
<div class="t" style="left:709.0px;width:60px;text-align:center;top:1290.7px;font-size:17.3px;color:#6b6b6b;font-weight:400;">Apr</div>
<div class="t" style="left:753.9px;width:60px;text-align:center;top:1290.7px;font-size:17.3px;color:#6b6b6b;font-weight:400;">May</div>
<div class="t" style="left:798.7px;width:60px;text-align:center;top:1290.7px;font-size:17.3px;color:#6b6b6b;font-weight:400;">Jun</div>
<div class="t" style="left:843.6px;width:60px;text-align:center;top:1290.7px;font-size:17.3px;color:#6b6b6b;font-weight:400;">Jul</div>
<div class="t" style="left:888.5px;width:60px;text-align:center;top:1290.7px;font-size:17.3px;color:#6b6b6b;font-weight:400;">Aug</div>
<div class="t" style="left:933.4px;width:60px;text-align:center;top:1290.7px;font-size:17.3px;color:#6b6b6b;font-weight:400;">Sep</div>
<div class="a" style="left:328px;top:1394px;width:703px;height:200px;background:#fff;border:1.5px solid #e2e8f0;border-radius:6px;box-shadow:0 1px 2px rgba(100,116,139,0.12)"></div>
<div class="t" style="left:347.8px;top:1415.2px;font-size:19.9px;color:#2d3d50;font-weight:400;-webkit-text-stroke:0.35px #2d3d50;">Monthly Opportunities</div>
<div class="a" style="left:329px;top:1452.6px;width:701px;height:1.5px;background:#e3e8ef"></div>
<div class="a" style="left:186px;width:500px;top:1482.8px;height:16.3px;display:flex;justify-content:center;align-items:center;white-space:nowrap;line-height:1"><span style="font-size:16.3px;letter-spacing:0px;color:#2d3d50;-webkit-text-stroke:0.45px #2d3d50">TTM COUNT</span><svg width="22" height="22" viewBox="0 0 24 24" style="margin-left:8px;position:relative;top:-0.5px;flex:none" fill="none" stroke="#56667b" stroke-width="1.8" stroke-linecap="round" stroke-linejoin="round"><circle cx="12" cy="12" r="10.8"/><path d="M12 17.3v.01" stroke-width="2.4"/><path d="M12 13.9a1.9 1.9 0 0 1 0.9 -1.7a3 3 0 1 0 -3.6 -4.4"/></svg></div>
<div class="t" style="left:236.0px;width:400px;text-align:center;top:1516.0px;font-size:29.5px;color:#0a8daa;font-weight:700;">99</div>
<div class="a" style="left:429.5px;width:500px;top:1482.8px;height:16.3px;display:flex;justify-content:center;align-items:center;white-space:nowrap;line-height:1"><span style="font-size:16.3px;letter-spacing:0px;color:#2d3d50;-webkit-text-stroke:0.45px #2d3d50">CURRENT YEAR</span><svg width="22" height="22" viewBox="0 0 24 24" style="margin-left:8px;position:relative;top:-0.5px;flex:none" fill="none" stroke="#56667b" stroke-width="1.8" stroke-linecap="round" stroke-linejoin="round"><circle cx="12" cy="12" r="10.8"/><path d="M12 17.3v.01" stroke-width="2.4"/><path d="M12 13.9a1.9 1.9 0 0 1 0.9 -1.7a3 3 0 1 0 -3.6 -4.4"/></svg></div>
<div class="t" style="left:479.5px;width:400px;text-align:center;top:1516.0px;font-size:29.5px;color:#0a8daa;font-weight:700;">88</div>
<div class="a" style="left:673px;width:500px;top:1482.8px;height:16.3px;display:flex;justify-content:center;align-items:center;white-space:nowrap;line-height:1"><span style="font-size:16.3px;letter-spacing:0px;color:#2d3d50;-webkit-text-stroke:0.45px #2d3d50">PREVIOUS YEAR</span><svg width="22" height="22" viewBox="0 0 24 24" style="margin-left:8px;position:relative;top:-0.5px;flex:none" fill="none" stroke="#56667b" stroke-width="1.8" stroke-linecap="round" stroke-linejoin="round"><circle cx="12" cy="12" r="10.8"/><path d="M12 17.3v.01" stroke-width="2.4"/><path d="M12 13.9a1.9 1.9 0 0 1 0.9 -1.7a3 3 0 1 0 -3.6 -4.4"/></svg></div>
<div class="t" style="left:723.0px;width:400px;text-align:center;top:1516.0px;font-size:29.5px;color:#0a8daa;font-weight:700;">13</div>
<div class="a" style="left:1055px;top:72px;width:703px;height:699px;background:#fff;border:1.5px solid #e2e8f0;border-radius:6px;box-shadow:0 1px 2px rgba(100,116,139,0.12)"></div>
<div class="t" style="left:1074.5px;top:93.5px;font-size:19.9px;color:#2d3d50;font-weight:400;-webkit-text-stroke:0.35px #2d3d50;">Monthly Profit Overview</div>
<div class="a" style="left:1056px;top:132.3px;width:701px;height:1.5px;background:#e3e8ef"></div>
<div class="a" style="left:913px;width:500px;top:161.9px;height:16.3px;display:flex;justify-content:center;align-items:center;white-space:nowrap;line-height:1"><span style="font-size:16.3px;letter-spacing:0px;color:#2d3d50;-webkit-text-stroke:0.45px #2d3d50">TTM REVENUE</span><svg width="22" height="22" viewBox="0 0 24 24" style="margin-left:8px;position:relative;top:-0.5px;flex:none" fill="none" stroke="#56667b" stroke-width="1.8" stroke-linecap="round" stroke-linejoin="round"><circle cx="12" cy="12" r="10.8"/><path d="M12 17.3v.01" stroke-width="2.4"/><path d="M12 13.9a1.9 1.9 0 0 1 0.9 -1.7a3 3 0 1 0 -3.6 -4.4"/></svg></div>
<div class="t" style="left:963.0px;width:400px;text-align:center;top:194.3px;font-size:29.5px;color:#0a8daa;font-weight:700;">$ 288.2K</div>
<div class="t" style="left:963.0px;width:400px;text-align:center;top:236.8px;font-size:19px;color:#5f6f84;font-weight:400;">+198.3% YoY</div>
<div class="a" style="left:1157px;width:500px;top:161.9px;height:16.3px;display:flex;justify-content:center;align-items:center;white-space:nowrap;line-height:1"><span style="font-size:16.3px;letter-spacing:0px;color:#2d3d50;-webkit-text-stroke:0.45px #2d3d50">TTM EXPENSES</span><svg width="22" height="22" viewBox="0 0 24 24" style="margin-left:8px;position:relative;top:-0.5px;flex:none" fill="none" stroke="#56667b" stroke-width="1.8" stroke-linecap="round" stroke-linejoin="round"><circle cx="12" cy="12" r="10.8"/><path d="M12 17.3v.01" stroke-width="2.4"/><path d="M12 13.9a1.9 1.9 0 0 1 0.9 -1.7a3 3 0 1 0 -3.6 -4.4"/></svg></div>
<div class="t" style="left:1207.0px;width:400px;text-align:center;top:194.3px;font-size:29.5px;color:#0a8daa;font-weight:700;">$ 37.4K</div>
<div class="t" style="left:1207.0px;width:400px;text-align:center;top:236.8px;font-size:19px;color:#5f6f84;font-weight:400;">+114.1% YoY</div>
<div class="a" style="left:1400px;width:500px;top:161.9px;height:16.3px;display:flex;justify-content:center;align-items:center;white-space:nowrap;line-height:1"><span style="font-size:16.3px;letter-spacing:0px;color:#2d3d50;-webkit-text-stroke:0.45px #2d3d50">TTM PROFIT</span><svg width="22" height="22" viewBox="0 0 24 24" style="margin-left:8px;position:relative;top:-0.5px;flex:none" fill="none" stroke="#56667b" stroke-width="1.8" stroke-linecap="round" stroke-linejoin="round"><circle cx="12" cy="12" r="10.8"/><path d="M12 17.3v.01" stroke-width="2.4"/><path d="M12 13.9a1.9 1.9 0 0 1 0.9 -1.7a3 3 0 1 0 -3.6 -4.4"/></svg></div>
<div class="t" style="left:1450.0px;width:400px;text-align:center;top:194.3px;font-size:29.5px;color:#0a8daa;font-weight:700;">$ 250.8K</div>
<div class="t" style="left:1450.0px;width:400px;text-align:center;top:236.8px;font-size:19px;color:#5f6f84;font-weight:400;">+217.0% YoY</div>
<div class="a" style="left:1056px;top:281.5px;width:701px;height:1.5px;background:#e3e8ef"></div>
<svg class="a" style="left:0;top:0" width="2505" height="1540"><line x1="1174" y1="324.0" x2="1712.4" y2="324.0" stroke="#d3d7de" stroke-width="1.3" stroke-dasharray="5 4"/><line x1="1174" y1="529.3" x2="1712.4" y2="529.3" stroke="#d3d7de" stroke-width="1.3" stroke-dasharray="5 4"/><line x1="1196.4" y1="324" x2="1196.4" y2="643.3" stroke="#d3d7de" stroke-width="1.3" stroke-dasharray="5 4"/><line x1="1241.3" y1="324" x2="1241.3" y2="643.3" stroke="#d3d7de" stroke-width="1.3" stroke-dasharray="5 4"/><line x1="1286.2" y1="324" x2="1286.2" y2="643.3" stroke="#d3d7de" stroke-width="1.3" stroke-dasharray="5 4"/><line x1="1331.0" y1="324" x2="1331.0" y2="643.3" stroke="#d3d7de" stroke-width="1.3" stroke-dasharray="5 4"/><line x1="1375.9" y1="324" x2="1375.9" y2="643.3" stroke="#d3d7de" stroke-width="1.3" stroke-dasharray="5 4"/><line x1="1420.8" y1="324" x2="1420.8" y2="643.3" stroke="#d3d7de" stroke-width="1.3" stroke-dasharray="5 4"/><line x1="1465.6" y1="324" x2="1465.6" y2="643.3" stroke="#d3d7de" stroke-width="1.3" stroke-dasharray="5 4"/><line x1="1510.5" y1="324" x2="1510.5" y2="643.3" stroke="#d3d7de" stroke-width="1.3" stroke-dasharray="5 4"/><line x1="1555.4" y1="324" x2="1555.4" y2="643.3" stroke="#d3d7de" stroke-width="1.3" stroke-dasharray="5 4"/><line x1="1600.2" y1="324" x2="1600.2" y2="643.3" stroke="#d3d7de" stroke-width="1.3" stroke-dasharray="5 4"/><line x1="1645.1" y1="324" x2="1645.1" y2="643.3" stroke="#d3d7de" stroke-width="1.3" stroke-dasharray="5 4"/><line x1="1690.0" y1="324" x2="1690.0" y2="643.3" stroke="#d3d7de" stroke-width="1.3" stroke-dasharray="5 4"/><line x1="1712.4" y1="324" x2="1712.4" y2="643.3" stroke="#d3d7de" stroke-width="1.3" stroke-dasharray="5 4"/><path d="M1178.43,643.30 L1178.43,590.68 Q1178.43,588.18 1180.93,588.18 L1190.53,588.18 Q1193.03,588.18 1193.03,590.68 L1193.03,643.30Z" fill="#0091b0"/><path d="M1199.23,643.30 L1199.23,626.79 Q1199.23,624.29 1201.73,624.29 L1211.13,624.29 Q1213.63,624.29 1213.63,626.79 L1213.63,643.30Z" fill="#bba8e9"/><path d="M1223.30,643.30 L1223.30,504.78 Q1223.30,502.28 1225.80,502.28 L1235.40,502.28 Q1237.90,502.28 1237.90,504.78 L1237.90,643.30Z" fill="#0091b0"/><path d="M1244.10,643.30 L1244.10,640.02 Q1244.10,637.52 1246.60,637.52 L1256.00,637.52 Q1258.50,637.52 1258.50,640.02 L1258.50,643.30Z" fill="#bba8e9"/><path d="M1268.17,643.30 L1268.17,482.35 Q1268.17,479.85 1270.67,479.85 L1280.27,479.85 Q1282.77,479.85 1282.77,482.35 L1282.77,643.30Z" fill="#0091b0"/><path d="M1288.97,643.30 L1288.97,610.07 Q1288.97,607.57 1291.47,607.57 L1300.87,607.57 Q1303.37,607.57 1303.37,610.07 L1303.37,643.30Z" fill="#bba8e9"/><path d="M1313.03,643.30 L1313.03,502.88 Q1313.03,500.38 1315.53,500.38 L1325.13,500.38 Q1327.63,500.38 1327.63,502.88 L1327.63,643.30Z" fill="#0091b0"/><path d="M1333.83,643.30 L1333.83,620.71 Q1333.83,618.21 1336.33,618.21 L1345.73,618.21 Q1348.23,618.21 1348.23,620.71 L1348.23,643.30Z" fill="#bba8e9"/><path d="M1357.90,643.30 L1357.90,450.42 Q1357.90,447.92 1360.40,447.92 L1370.00,447.92 Q1372.50,447.92 1372.50,450.42 L1372.50,643.30Z" fill="#0091b0"/><path d="M1378.70,643.30 L1378.70,613.41 Q1378.70,610.91 1381.20,610.91 L1390.60,610.91 Q1393.10,610.91 1393.10,613.41 L1393.10,643.30Z" fill="#bba8e9"/><path d="M1402.77,643.30 L1402.77,542.41 Q1402.77,539.91 1405.27,539.91 L1414.87,539.91 Q1417.37,539.91 1417.37,542.41 L1417.37,643.30Z" fill="#0091b0"/><path d="M1423.57,643.30 L1423.57,634.40 Q1423.57,631.90 1426.07,631.90 L1435.47,631.90 Q1437.97,631.90 1437.97,634.40 L1437.97,643.30Z" fill="#bba8e9"/><path d="M1447.63,643.30 L1447.63,518.08 Q1447.63,515.58 1450.13,515.58 L1459.73,515.58 Q1462.23,515.58 1462.23,518.08 L1462.23,643.30Z" fill="#0091b0"/><path d="M1468.43,643.30 L1468.43,623.75 Q1468.43,621.25 1470.93,621.25 L1480.33,621.25 Q1482.83,621.25 1482.83,623.75 L1482.83,643.30Z" fill="#bba8e9"/><path d="M1492.50,643.30 L1492.50,417.73 Q1492.50,415.23 1495.00,415.23 L1504.60,415.23 Q1507.10,415.23 1507.10,417.73 L1507.10,643.30Z" fill="#0091b0"/><path d="M1513.30,643.30 L1513.30,632.12 Q1513.30,629.62 1515.80,629.62 L1525.20,629.62 Q1527.70,629.62 1527.70,632.12 L1527.70,643.30Z" fill="#bba8e9"/><path d="M1537.37,643.30 L1537.37,399.48 Q1537.37,396.98 1539.87,396.98 L1549.47,396.98 Q1551.97,396.98 1551.97,399.48 L1551.97,643.30Z" fill="#0091b0"/><path d="M1558.17,643.30 L1558.17,621.47 Q1558.17,618.97 1560.67,618.97 L1570.07,618.97 Q1572.57,618.97 1572.57,621.47 L1572.57,643.30Z" fill="#bba8e9"/><path d="M1582.23,643.30 L1582.23,363.75 Q1582.23,361.25 1584.73,361.25 L1594.33,361.25 Q1596.83,361.25 1596.83,363.75 L1596.83,643.30Z" fill="#0091b0"/><path d="M1603.03,643.30 L1603.03,607.79 Q1603.03,605.29 1605.53,605.29 L1614.93,605.29 Q1617.43,605.29 1617.43,607.79 L1617.43,643.30Z" fill="#bba8e9"/><path d="M1627.10,643.30 L1627.10,327.26 Q1627.10,324.76 1629.60,324.76 L1639.20,324.76 Q1641.70,324.76 1641.70,327.26 L1641.70,643.30Z" fill="#0091b0"/><path d="M1647.90,643.30 L1647.90,602.09 Q1647.90,599.59 1650.40,599.59 L1659.80,599.59 Q1662.30,599.59 1662.30,602.09 L1662.30,643.30Z" fill="#bba8e9"/><path d="M1671.97,643.30 L1671.97,483.87 Q1671.97,481.37 1674.47,481.37 L1684.07,481.37 Q1686.57,481.37 1686.57,483.87 L1686.57,643.30Z" fill="#0091b0"/><path d="M1692.77,643.30 L1692.77,638.58 Q1692.77,636.08 1695.27,636.08 L1704.67,636.08 Q1707.17,636.08 1707.17,638.58 L1707.17,643.30Z" fill="#bba8e9"/><line x1="1174" y1="323.5" x2="1174" y2="643.3" stroke="#6b6b6b" stroke-width="1.6"/><line x1="1165" y1="643.3" x2="1712.4" y2="643.3" stroke="#6b6b6b" stroke-width="1.6"/><line x1="1166" y1="324.0" x2="1174" y2="324.0" stroke="#6b6b6b" stroke-width="1.6"/><line x1="1166" y1="529.3" x2="1174" y2="529.3" stroke="#6b6b6b" stroke-width="1.6"/><line x1="1196.4" y1="643.3" x2="1196.4" y2="651.8" stroke="#6b6b6b" stroke-width="1.6"/><line x1="1241.3" y1="643.3" x2="1241.3" y2="651.8" stroke="#6b6b6b" stroke-width="1.6"/><line x1="1286.2" y1="643.3" x2="1286.2" y2="651.8" stroke="#6b6b6b" stroke-width="1.6"/><line x1="1331.0" y1="643.3" x2="1331.0" y2="651.8" stroke="#6b6b6b" stroke-width="1.6"/><line x1="1375.9" y1="643.3" x2="1375.9" y2="651.8" stroke="#6b6b6b" stroke-width="1.6"/><line x1="1420.8" y1="643.3" x2="1420.8" y2="651.8" stroke="#6b6b6b" stroke-width="1.6"/><line x1="1465.6" y1="643.3" x2="1465.6" y2="651.8" stroke="#6b6b6b" stroke-width="1.6"/><line x1="1510.5" y1="643.3" x2="1510.5" y2="651.8" stroke="#6b6b6b" stroke-width="1.6"/><line x1="1555.4" y1="643.3" x2="1555.4" y2="651.8" stroke="#6b6b6b" stroke-width="1.6"/><line x1="1600.2" y1="643.3" x2="1600.2" y2="651.8" stroke="#6b6b6b" stroke-width="1.6"/><line x1="1645.1" y1="643.3" x2="1645.1" y2="651.8" stroke="#6b6b6b" stroke-width="1.6"/><line x1="1690.0" y1="643.3" x2="1690.0" y2="651.8" stroke="#6b6b6b" stroke-width="1.6"/><path d="M1196.43,607.19 C1211.39,557.62 1226.34,508.05 1241.30,508.05 C1256.26,508.05 1271.21,512.68 1286.17,515.58 C1301.12,518.48 1316.08,525.46 1331.03,525.46 C1345.99,525.46 1360.94,480.30 1375.90,480.30 C1390.86,480.30 1405.81,551.31 1420.77,551.31 C1435.72,551.31 1450.68,546.75 1465.63,537.63 C1480.59,528.50 1495.54,433.98 1510.50,428.91 C1525.46,423.84 1540.41,426.25 1555.37,421.31 C1570.32,416.37 1585.28,408.07 1600.23,399.26 C1615.19,390.46 1630.14,368.47 1645.10,368.47 C1660.06,368.47 1675.01,428.53 1689.97,488.59" fill="none" stroke="#f9765a" stroke-width="2.6"/><circle cx="1196.4" cy="607.2" r="5.6" fill="#f9765a"/><circle cx="1241.3" cy="508.1" r="5.6" fill="#f9765a"/><circle cx="1286.2" cy="515.6" r="5.6" fill="#f9765a"/><circle cx="1331.0" cy="525.5" r="5.6" fill="#f9765a"/><circle cx="1375.9" cy="480.3" r="5.6" fill="#f9765a"/><circle cx="1420.8" cy="551.3" r="5.6" fill="#f9765a"/><circle cx="1465.6" cy="537.6" r="5.6" fill="#f9765a"/><circle cx="1510.5" cy="428.9" r="5.6" fill="#f9765a"/><circle cx="1555.4" cy="421.3" r="5.6" fill="#f9765a"/><circle cx="1600.2" cy="399.3" r="5.6" fill="#f9765a"/><circle cx="1645.1" cy="368.5" r="5.6" fill="#f9765a"/><circle cx="1690.0" cy="488.6" r="5.6" fill="#f9765a"/></svg>
<div class="t" style="left:1081.5px;width:80px;text-align:right;top:317.3px;font-size:16.8px;color:#6b6b6b;font-weight:400;">$42k</div>
<div class="t" style="left:1081.5px;width:80px;text-align:right;top:522.3px;font-size:16.8px;color:#6b6b6b;font-weight:400;">$15k</div>
<div class="t" style="left:1081.5px;width:80px;text-align:right;top:634.8px;font-size:16.8px;color:#6b6b6b;font-weight:400;">$0k</div>
<div class="t" style="left:1166.4px;width:60px;text-align:center;top:653.1px;font-size:17.3px;color:#6b6b6b;font-weight:400;">Oct</div>
<div class="t" style="left:1211.3px;width:60px;text-align:center;top:653.1px;font-size:17.3px;color:#6b6b6b;font-weight:400;">Nov</div>
<div class="t" style="left:1256.2px;width:60px;text-align:center;top:653.1px;font-size:17.3px;color:#6b6b6b;font-weight:400;">Dec</div>
<div class="t" style="left:1301.0px;width:60px;text-align:center;top:653.1px;font-size:17.3px;color:#6b6b6b;font-weight:400;">Jan</div>
<div class="t" style="left:1345.9px;width:60px;text-align:center;top:653.1px;font-size:17.3px;color:#6b6b6b;font-weight:400;">Feb</div>
<div class="t" style="left:1390.8px;width:60px;text-align:center;top:653.1px;font-size:17.3px;color:#6b6b6b;font-weight:400;">Mar</div>
<div class="t" style="left:1435.6px;width:60px;text-align:center;top:653.1px;font-size:17.3px;color:#6b6b6b;font-weight:400;">Apr</div>
<div class="t" style="left:1480.5px;width:60px;text-align:center;top:653.1px;font-size:17.3px;color:#6b6b6b;font-weight:400;">May</div>
<div class="t" style="left:1525.4px;width:60px;text-align:center;top:653.1px;font-size:17.3px;color:#6b6b6b;font-weight:400;">Jun</div>
<div class="t" style="left:1570.2px;width:60px;text-align:center;top:653.1px;font-size:17.3px;color:#6b6b6b;font-weight:400;">Jul</div>
<div class="t" style="left:1615.1px;width:60px;text-align:center;top:653.1px;font-size:17.3px;color:#6b6b6b;font-weight:400;">Aug</div>
<div class="t" style="left:1660.0px;width:60px;text-align:center;top:653.1px;font-size:17.3px;color:#6b6b6b;font-weight:400;">Sep</div>
<div class="a" style="left:1300.6px;top:707px;width:20px;height:20px;background:#0091b0;border-radius:50%"></div>
<div class="t" style="left:1326.8px;top:708.4px;font-size:17.8px;color:#0091b0;font-weight:400;">Revenue</div>
<div class="a" style="left:1411.7px;top:707px;width:20px;height:20px;background:#bba8e9;border-radius:50%"></div>
<div class="t" style="left:1438.6px;top:708.4px;font-size:17.8px;color:#bba8e9;font-weight:400;">Expenses</div>
<div class="a" style="left:1530.6px;top:707px;width:20px;height:20px;background:#f9765a;border-radius:50%"></div>
<div class="t" style="left:1557.8px;top:708.4px;font-size:17.8px;color:#f9765a;font-weight:400;">Profit</div>
<div class="a" style="left:1055px;top:797px;width:703px;height:526px;background:#fff;border:1.5px solid #e2e8f0;border-radius:6px;box-shadow:0 1px 2px rgba(100,116,139,0.12)"></div>
<div class="t" style="left:1074.5px;top:819.2px;font-size:19.9px;color:#2d3d50;font-weight:400;-webkit-text-stroke:0.35px #2d3d50;">Opportunity Funnel</div>
<div class="a" style="left:1056px;top:856.8px;width:701px;height:1.5px;background:#e3e8ef"></div>
<div class="a" style="left:904px;width:500px;top:886.0px;height:16.3px;display:flex;justify-content:center;align-items:center;white-space:nowrap;line-height:1"><span style="font-size:16.3px;letter-spacing:0px;color:#2d3d50;-webkit-text-stroke:0.45px #2d3d50">TOTAL COUNT</span><svg width="22" height="22" viewBox="0 0 24 24" style="margin-left:8px;position:relative;top:-0.5px;flex:none" fill="none" stroke="#56667b" stroke-width="1.8" stroke-linecap="round" stroke-linejoin="round"><circle cx="12" cy="12" r="10.8"/><path d="M12 17.3v.01" stroke-width="2.4"/><path d="M12 13.9a1.9 1.9 0 0 1 0.9 -1.7a3 3 0 1 0 -3.6 -4.4"/></svg></div>
<div class="t" style="left:954.0px;width:400px;text-align:center;top:918.7px;font-size:29.5px;color:#0a8daa;font-weight:700;">84</div>
<div class="t" style="left:954.0px;width:400px;text-align:center;top:961.4px;font-size:19px;color:#5f6f84;font-weight:400;">In pipeline</div>
<div class="a" style="left:1137px;width:500px;top:886.0px;height:16.3px;display:flex;justify-content:center;align-items:center;white-space:nowrap;line-height:1"><span style="font-size:16.3px;letter-spacing:0px;color:#2d3d50;-webkit-text-stroke:0.45px #2d3d50">PIPELINE VALUE</span><svg width="22" height="22" viewBox="0 0 24 24" style="margin-left:8px;position:relative;top:-0.5px;flex:none" fill="none" stroke="#56667b" stroke-width="1.8" stroke-linecap="round" stroke-linejoin="round"><circle cx="12" cy="12" r="10.8"/><path d="M12 17.3v.01" stroke-width="2.4"/><path d="M12 13.9a1.9 1.9 0 0 1 0.9 -1.7a3 3 0 1 0 -3.6 -4.4"/></svg></div>
<div class="t" style="left:1187.0px;width:400px;text-align:center;top:918.7px;font-size:29.5px;color:#0a8daa;font-weight:700;">$ 101.0K</div>
<div class="t" style="left:1187.0px;width:400px;text-align:center;top:961.4px;font-size:19px;color:#5f6f84;font-weight:400;">Total value</div>
<div class="a" style="left:1390px;width:500px;top:886.0px;height:16.3px;display:flex;justify-content:center;align-items:center;white-space:nowrap;line-height:1"><span style="font-size:16.3px;letter-spacing:0px;color:#2d3d50;-webkit-text-stroke:0.45px #2d3d50">CONVERSION RATE</span><svg width="22" height="22" viewBox="0 0 24 24" style="margin-left:8px;position:relative;top:-0.5px;flex:none" fill="none" stroke="#56667b" stroke-width="1.8" stroke-linecap="round" stroke-linejoin="round"><circle cx="12" cy="12" r="10.8"/><path d="M12 17.3v.01" stroke-width="2.4"/><path d="M12 13.9a1.9 1.9 0 0 1 0.9 -1.7a3 3 0 1 0 -3.6 -4.4"/></svg></div>
<div class="t" style="left:1440.0px;width:400px;text-align:center;top:918.7px;font-size:29.5px;color:#0a8daa;font-weight:700;">11.9%</div>
<div class="t" style="left:1440.0px;width:400px;text-align:center;top:961.4px;font-size:19px;color:#5f6f84;font-weight:400;">All to Won</div>
<div class="a" style="left:1056px;top:1005.3px;width:701px;height:1.5px;background:#e3e8ef"></div>
<div class="a" style="left:1080px;top:1043px;width:653.8px;height:17px;border-radius:9px;overflow:hidden;display:flex"><div style="width:334.7px;background:#ffd34f"></div><div style="width:209.9px;background:#fde58c"></div><div style="flex:1;background:#72e6b4"></div></div>
<div class="a" style="left:1079.5px;top:1112.8px;width:18px;height:18px;background:#ffd34f;border-radius:50%"></div>
<div class="t" style="left:1115.7px;top:1100.5px;font-size:19.8px;color:#2d3d50;font-weight:400;-webkit-text-stroke:0.6px #2d3d50;letter-spacing:0.3px">Enquiry</div>
<div class="t" style="left:1115.7px;top:1127.1px;font-size:18.2px;color:#5f6f84;font-weight:400;letter-spacing:0.2px">43 opportunities · $ 49.7K</div>
<div class="a" style="left:1522px;top:1117.5px;width:141px;height:9px;background:#f0f2f5;border-radius:5px"></div>
<div class="a" style="left:1522px;top:1117.5px;width:72.19200000000001px;height:9px;background:#ffd34f;border-radius:5px"></div>
<div class="t" style="left:1633.0px;width:100px;text-align:right;top:1114.8px;font-size:17px;color:#475569;font-weight:400;-webkit-text-stroke:0.35px #475569">51.2%</div>
<div class="a" style="left:1079.5px;top:1188.7px;width:18px;height:18px;background:#fde58c;border-radius:50%"></div>
<div class="t" style="left:1115.7px;top:1176.4px;font-size:19.8px;color:#2d3d50;font-weight:400;-webkit-text-stroke:0.6px #2d3d50;letter-spacing:0.3px">Qualified</div>
<div class="t" style="left:1115.7px;top:1203.0px;font-size:18.2px;color:#5f6f84;font-weight:400;letter-spacing:0.2px">27 opportunities · $ 32.6K</div>
<div class="a" style="left:1522px;top:1193.4px;width:141px;height:9px;background:#f0f2f5;border-radius:5px"></div>
<div class="a" style="left:1522px;top:1193.4px;width:45.261px;height:9px;background:#fde58c;border-radius:5px"></div>
<div class="t" style="left:1633.0px;width:100px;text-align:right;top:1190.7px;font-size:17px;color:#475569;font-weight:400;-webkit-text-stroke:0.35px #475569">32.1%</div>
<div class="a" style="left:1079.5px;top:1264.6px;width:18px;height:18px;background:#72e6b4;border-radius:50%"></div>
<div class="t" style="left:1115.7px;top:1252.3px;font-size:19.8px;color:#2d3d50;font-weight:400;-webkit-text-stroke:0.6px #2d3d50;letter-spacing:0.3px">Proposal</div>
<div class="t" style="left:1115.7px;top:1278.9px;font-size:18.2px;color:#5f6f84;font-weight:400;letter-spacing:0.2px">14 opportunities · $ 18.7K</div>
<div class="a" style="left:1522px;top:1269.3px;width:141px;height:9px;background:#f0f2f5;border-radius:5px"></div>
<div class="a" style="left:1522px;top:1269.3px;width:23.547px;height:9px;background:#72e6b4;border-radius:5px"></div>
<div class="t" style="left:1633.0px;width:100px;text-align:right;top:1266.6px;font-size:17px;color:#475569;font-weight:400;-webkit-text-stroke:0.35px #475569">16.7%</div>
<div class="a" style="left:1055px;top:1348px;width:703px;height:260px;background:#fff;border:1.5px solid #e2e8f0;border-radius:6px;box-shadow:0 1px 2px rgba(100,116,139,0.12)"></div>
<div class="t" style="left:1074.5px;top:1369.6px;font-size:19.9px;color:#2d3d50;font-weight:400;-webkit-text-stroke:0.35px #2d3d50;">Monthly Expenses by Category</div>
<div class="a" style="left:1056px;top:1407.9px;width:701px;height:1.5px;background:#e3e8ef"></div>
<div class="a" style="left:932px;width:500px;top:1449.7px;height:16.3px;display:flex;justify-content:center;align-items:center;white-space:nowrap;line-height:1"><span style="font-size:16.3px;letter-spacing:0px;color:#2d3d50;-webkit-text-stroke:0.45px #2d3d50">INSTRUCTOR FEES</span><svg width="22" height="22" viewBox="0 0 24 24" style="margin-left:8px;position:relative;top:-0.5px;flex:none" fill="none" stroke="#56667b" stroke-width="1.8" stroke-linecap="round" stroke-linejoin="round"><circle cx="12" cy="12" r="10.8"/><path d="M12 17.3v.01" stroke-width="2.4"/><path d="M12 13.9a1.9 1.9 0 0 1 0.9 -1.7a3 3 0 1 0 -3.6 -4.4"/></svg></div>
<div class="t" style="left:982.0px;width:400px;text-align:center;top:1481.0px;font-size:29.5px;color:#0a8daa;font-weight:700;">$ 20.0K</div>
<div class="t" style="left:982.0px;width:400px;text-align:center;top:1525.9px;font-size:19px;color:#5f6f84;font-weight:400;">TTM</div>
<div class="a" style="left:1184px;width:500px;top:1449.7px;height:16.3px;display:flex;justify-content:center;align-items:center;white-space:nowrap;line-height:1"><span style="font-size:16.3px;letter-spacing:0px;color:#2d3d50;-webkit-text-stroke:0.45px #2d3d50">VENUE BOOKING</span><svg width="22" height="22" viewBox="0 0 24 24" style="margin-left:8px;position:relative;top:-0.5px;flex:none" fill="none" stroke="#56667b" stroke-width="1.8" stroke-linecap="round" stroke-linejoin="round"><circle cx="12" cy="12" r="10.8"/><path d="M12 17.3v.01" stroke-width="2.4"/><path d="M12 13.9a1.9 1.9 0 0 1 0.9 -1.7a3 3 0 1 0 -3.6 -4.4"/></svg></div>
<div class="t" style="left:1234.0px;width:400px;text-align:center;top:1481.0px;font-size:29.5px;color:#0a8daa;font-weight:700;">$ 6.1K</div>
<div class="t" style="left:1234.0px;width:400px;text-align:center;top:1525.9px;font-size:19px;color:#5f6f84;font-weight:400;">TTM</div>
<div class="a" style="left:1403px;width:500px;top:1449.7px;height:16.3px;display:flex;justify-content:center;align-items:center;white-space:nowrap;line-height:1"><span style="font-size:16.3px;letter-spacing:0px;color:#2d3d50;-webkit-text-stroke:0.45px #2d3d50">CATERING</span><svg width="22" height="22" viewBox="0 0 24 24" style="margin-left:8px;position:relative;top:-0.5px;flex:none" fill="none" stroke="#56667b" stroke-width="1.8" stroke-linecap="round" stroke-linejoin="round"><circle cx="12" cy="12" r="10.8"/><path d="M12 17.3v.01" stroke-width="2.4"/><path d="M12 13.9a1.9 1.9 0 0 1 0.9 -1.7a3 3 0 1 0 -3.6 -4.4"/></svg></div>
<div class="t" style="left:1453.0px;width:400px;text-align:center;top:1481.0px;font-size:29.5px;color:#0a8daa;font-weight:700;">$ 3.3K</div>
<div class="t" style="left:1453.0px;width:400px;text-align:center;top:1525.9px;font-size:19px;color:#5f6f84;font-weight:400;">TTM</div>
<div class="a" style="left:1783px;top:72px;width:703px;height:694px;background:#fff;border:1.5px solid #e2e8f0;border-radius:6px;box-shadow:0 1px 2px rgba(100,116,139,0.12)"></div>
<div class="t" style="left:1802.3px;top:93.7px;font-size:19.9px;color:#2d3d50;font-weight:400;-webkit-text-stroke:0.35px #2d3d50;">Tasks</div>
<div class="a" style="left:2261px;top:85.5px;width:205px;height:34.5px;background:#fff;border:1.5px solid #e3e8ef;border-radius:7px;box-shadow:0 1px 2px rgba(30,41,59,0.06)"></div>
<div class="t" style="left:2280.5px;top:93.8px;font-size:19.5px;color:#2d3d50;font-weight:400;">My tasks</div>
<svg class="a" style="left:2431px;top:95.0px;" width="11" height="16" viewBox="0 0 11 16"><path d="M1.5 5.5 L5.5 1.5 L9.5 5.5 M1.5 10.5 L5.5 14.5 L9.5 10.5" fill="none" stroke="#7a8799" stroke-width="1.5" stroke-linecap="round" stroke-linejoin="round"/></svg>
<div class="a" style="left:1784px;top:132.3px;width:701px;height:1.5px;background:#e3e8ef"></div>
<div class="a" style="left:1784px;top:133.8px;width:701px;height:42px;background:#f8f9fb"></div>
<div class="t" style="left:1802.3px;top:146.4px;font-size:17.6px;color:#56677d;font-weight:400;-webkit-text-stroke:0.6px #56677d;letter-spacing:0.6px">Overdue</div>
<div class="a" style="left:1784px;top:175px;width:701px;height:1.5px;background:#e3e8ef"></div>
<div class="a" style="left:1802px;top:191.5px;width:26px;height:26px;border:2.2px solid #1f2d3d;border-radius:50%;box-shadow:0 1px 2px rgba(0,0,0,0.12)"></div>
<div class="a" style="left:1841px;top:193.2px;display:flex;align-items:flex-start;line-height:1;white-space:nowrap"><span style="font-size:20.6px;letter-spacing:0.45px;color:#0a8daa;-webkit-text-stroke:0.4px #0a8daa">Print training material &amp; certificates</span><svg width="20" height="20" viewBox="1.5 1.5 21 21" style="margin-left:12px;position:relative;top:-5px;flex:none"><path d="M12 2.5l2.9 6.1l6.6 .9l-4.8 4.6l1.2 6.6l-5.9 -3.2l-5.9 3.2l1.2 -6.6l-4.8 -4.6l6.6 -.9z" fill="#2a9a6c" stroke="#2a9a6c" stroke-width="1.2" stroke-linejoin="round"/></svg></div>
<div class="a" style="left:1841px;top:220.0px;display:flex;align-items:flex-start;line-height:1;white-space:nowrap"><span style="font-size:18px;letter-spacing:0.3px;color:#5f6f84">Session: Practical Artificial Intelligence, 31 Aug 2025</span><svg width="18" height="18" viewBox="3 3 18 18" style="margin-left:13px;position:relative;top:-2px;flex:none" fill="none" stroke="#1591b0" stroke-width="2" stroke-linecap="round" stroke-linejoin="round"><path d="M12 6h-6a2 2 0 0 0 -2 2v10a2 2 0 0 0 2 2h10a2 2 0 0 0 2 -2v-6"/><path d="M11 13l9 -9"/><path d="M15 4h5v5"/></svg></div>
<div class="a" style="left:1841.5px;top:246.8px;height:24px;display:flex;align-items:center;line-height:1;white-space:nowrap"><svg width="17" height="15" viewBox="0 0 17 15" style="flex:none;position:relative;top:-1px"><rect x="0.5" y="8" width="4" height="7" rx="1" fill="#566579"/><rect x="6.3" y="4.5" width="4" height="10.5" rx="1" fill="#566579"/><rect x="12.1" y="0.5" width="4" height="14.5" rx="1" fill="#cfd5dd"/></svg><span style="margin-left:9px;font-size:18px;color:#5f6f84">Medium</span><svg width="19" height="19" viewBox="2.5 2 20 20" style="margin-left:14px;flex:none" fill="none" stroke="#f4573a" stroke-width="1.8" stroke-linecap="round" stroke-linejoin="round"><path d="M13 21h-7a2 2 0 0 1 -2 -2v-12a2 2 0 0 1 2 -2h12a2 2 0 0 1 2 2v6.5"/><path d="M16 3v4"/><path d="M8 3v4"/><path d="M4 11h16"/><path d="M18 18l4 4M22 18l-4 4"/></svg><span style="margin-left:7px;font-size:18px;color:#2d3d50;font-weight:700">Aug 23</span><svg width="15.5" height="17" viewBox="3 2 18 20" style="margin-left:15px;flex:none" fill="none" stroke="#5b6b80" stroke-width="2" stroke-linecap="round" stroke-linejoin="round"><circle cx="12" cy="8" r="5"/><path d="M20 21a8 8 0 0 0 -16 0"/></svg><span style="margin-left:9.5px;font-size:18px;color:#5f6f84">Yousef</span></div>
<div class="a" style="left:1784px;top:281.5px;width:701px;height:1.5px;background:#e3e8ef"></div>
<div class="a" style="left:1802px;top:298.0px;width:26px;height:26px;border:2.2px solid #1f2d3d;border-radius:50%;box-shadow:0 1px 2px rgba(0,0,0,0.12)"></div>
<div class="a" style="left:1841px;top:299.7px;display:flex;align-items:flex-start;line-height:1;white-space:nowrap"><span style="font-size:20.6px;letter-spacing:0.45px;color:#0a8daa;-webkit-text-stroke:0.4px #0a8daa">Follow up</span></div>
<div class="a" style="left:1841px;top:326.5px;display:flex;align-items:flex-start;line-height:1;white-space:nowrap"><span style="font-size:18px;letter-spacing:0.3px;color:#5f6f84">Opportunity: Johnathan McLaughlin - EC5 - Enquiry</span><svg width="18" height="18" viewBox="3 3 18 18" style="margin-left:13px;position:relative;top:-2px;flex:none" fill="none" stroke="#1591b0" stroke-width="2" stroke-linecap="round" stroke-linejoin="round"><path d="M12 6h-6a2 2 0 0 0 -2 2v10a2 2 0 0 0 2 2h10a2 2 0 0 0 2 -2v-6"/><path d="M11 13l9 -9"/><path d="M15 4h5v5"/></svg></div>
<div class="a" style="left:1841.5px;top:353.3px;height:24px;display:flex;align-items:center;line-height:1;white-space:nowrap"><svg width="17" height="15" viewBox="0 0 17 15" style="flex:none;position:relative;top:-1px"><rect x="0.5" y="8" width="4" height="7" rx="1" fill="#566579"/><rect x="6.3" y="4.5" width="4" height="10.5" rx="1" fill="#566579"/><rect x="12.1" y="0.5" width="4" height="14.5" rx="1" fill="#cfd5dd"/></svg><span style="margin-left:9px;font-size:18px;color:#5f6f84">Medium</span><svg width="19" height="19" viewBox="2.5 2 20 20" style="margin-left:14px;flex:none" fill="none" stroke="#f4573a" stroke-width="1.8" stroke-linecap="round" stroke-linejoin="round"><path d="M13 21h-7a2 2 0 0 1 -2 -2v-12a2 2 0 0 1 2 -2h12a2 2 0 0 1 2 2v6.5"/><path d="M16 3v4"/><path d="M8 3v4"/><path d="M4 11h16"/><path d="M18 18l4 4M22 18l-4 4"/></svg><span style="margin-left:7px;font-size:18px;color:#2d3d50;font-weight:700">Aug 25</span><svg width="15.5" height="17" viewBox="3 2 18 20" style="margin-left:15px;flex:none" fill="none" stroke="#5b6b80" stroke-width="2" stroke-linecap="round" stroke-linejoin="round"><circle cx="12" cy="8" r="5"/><path d="M20 21a8 8 0 0 0 -16 0"/></svg><span style="margin-left:9.5px;font-size:18px;color:#5f6f84">Yousef</span></div>
<div class="a" style="left:1784px;top:388.0px;width:701px;height:1.5px;background:#e3e8ef"></div>
<div class="a" style="left:1802px;top:404.5px;width:26px;height:26px;border:2.2px solid #1f2d3d;border-radius:50%;box-shadow:0 1px 2px rgba(0,0,0,0.12)"></div>
<div class="a" style="left:1841px;top:406.2px;display:flex;align-items:flex-start;line-height:1;white-space:nowrap"><span style="font-size:20.6px;letter-spacing:0.45px;color:#0a8daa;-webkit-text-stroke:0.4px #0a8daa">Book training venue</span><svg width="20" height="20" viewBox="1.5 1.5 21 21" style="margin-left:12px;position:relative;top:-5px;flex:none"><path d="M12 2.5l2.9 6.1l6.6 .9l-4.8 4.6l1.2 6.6l-5.9 -3.2l-5.9 3.2l1.2 -6.6l-4.8 -4.6l6.6 -.9z" fill="#2a9a6c" stroke="#2a9a6c" stroke-width="1.2" stroke-linejoin="round"/></svg></div>
<div class="a" style="left:1841px;top:433.0px;display:flex;align-items:flex-start;line-height:1;white-space:nowrap"><span style="font-size:18px;letter-spacing:0.3px;color:#5f6f84">Session: Practical Artificial Intelligence, 31 Aug 2025</span><svg width="18" height="18" viewBox="3 3 18 18" style="margin-left:13px;position:relative;top:-2px;flex:none" fill="none" stroke="#1591b0" stroke-width="2" stroke-linecap="round" stroke-linejoin="round"><path d="M12 6h-6a2 2 0 0 0 -2 2v10a2 2 0 0 0 2 2h10a2 2 0 0 0 2 -2v-6"/><path d="M11 13l9 -9"/><path d="M15 4h5v5"/></svg></div>
<div class="a" style="left:1841.5px;top:459.8px;height:24px;display:flex;align-items:center;line-height:1;white-space:nowrap"><svg width="17" height="15" viewBox="0 0 17 15" style="flex:none;position:relative;top:-1px"><rect x="0.5" y="8" width="4" height="7" rx="1" fill="#566579"/><rect x="6.3" y="4.5" width="4" height="10.5" rx="1" fill="#566579"/><rect x="12.1" y="0.5" width="4" height="14.5" rx="1" fill="#cfd5dd"/></svg><span style="margin-left:9px;font-size:18px;color:#5f6f84">Medium</span><svg width="19" height="19" viewBox="2.5 2 20 20" style="margin-left:14px;flex:none" fill="none" stroke="#f4573a" stroke-width="1.8" stroke-linecap="round" stroke-linejoin="round"><path d="M13 21h-7a2 2 0 0 1 -2 -2v-12a2 2 0 0 1 2 -2h12a2 2 0 0 1 2 2v6.5"/><path d="M16 3v4"/><path d="M8 3v4"/><path d="M4 11h16"/><path d="M18 18l4 4M22 18l-4 4"/></svg><span style="margin-left:7px;font-size:18px;color:#2d3d50;font-weight:700">Aug 29</span><svg width="15.5" height="17" viewBox="3 2 18 20" style="margin-left:15px;flex:none" fill="none" stroke="#5b6b80" stroke-width="2" stroke-linecap="round" stroke-linejoin="round"><circle cx="12" cy="8" r="5"/><path d="M20 21a8 8 0 0 0 -16 0"/></svg><span style="margin-left:9.5px;font-size:18px;color:#5f6f84">Yousef</span></div>
<div class="a" style="left:1784px;top:494.5px;width:701px;height:1.5px;background:#e3e8ef"></div>
<div class="a" style="left:1802px;top:511.0px;width:26px;height:26px;border:2.2px solid #1f2d3d;border-radius:50%;box-shadow:0 1px 2px rgba(0,0,0,0.12)"></div>
<div class="a" style="left:1841px;top:512.7px;display:flex;align-items:flex-start;line-height:1;white-space:nowrap"><span style="font-size:20.6px;letter-spacing:0.45px;color:#0a8daa;-webkit-text-stroke:0.4px #0a8daa">Send instructor contract</span><svg width="20" height="20" viewBox="1.5 1.5 21 21" style="margin-left:12px;position:relative;top:-5px;flex:none"><path d="M12 2.5l2.9 6.1l6.6 .9l-4.8 4.6l1.2 6.6l-5.9 -3.2l-5.9 3.2l1.2 -6.6l-4.8 -4.6l6.6 -.9z" fill="#2a9a6c" stroke="#2a9a6c" stroke-width="1.2" stroke-linejoin="round"/></svg></div>
<div class="a" style="left:1841px;top:539.5px;display:flex;align-items:flex-start;line-height:1;white-space:nowrap"><span style="font-size:18px;letter-spacing:0.3px;color:#5f6f84">Session: Practical Artificial Intelligence, 31 Aug 2025</span><svg width="18" height="18" viewBox="3 3 18 18" style="margin-left:13px;position:relative;top:-2px;flex:none" fill="none" stroke="#1591b0" stroke-width="2" stroke-linecap="round" stroke-linejoin="round"><path d="M12 6h-6a2 2 0 0 0 -2 2v10a2 2 0 0 0 2 2h10a2 2 0 0 0 2 -2v-6"/><path d="M11 13l9 -9"/><path d="M15 4h5v5"/></svg></div>
<div class="a" style="left:1841.5px;top:566.3px;height:24px;display:flex;align-items:center;line-height:1;white-space:nowrap"><span style="display:inline-flex;width:18px;height:18px;background:#f05a3b;border-radius:3px;align-items:center;justify-content:center;color:#fff;font-size:13px;font-weight:700;position:relative;top:-1px">!</span><span style="margin-left:9px;font-size:18px;color:#2d3d50;font-weight:700">Urgent</span><svg width="19" height="19" viewBox="2.5 2 20 20" style="margin-left:14px;flex:none" fill="none" stroke="#f4573a" stroke-width="1.8" stroke-linecap="round" stroke-linejoin="round"><path d="M13 21h-7a2 2 0 0 1 -2 -2v-12a2 2 0 0 1 2 -2h12a2 2 0 0 1 2 2v6.5"/><path d="M16 3v4"/><path d="M8 3v4"/><path d="M4 11h16"/><path d="M18 18l4 4M22 18l-4 4"/></svg><span style="margin-left:7px;font-size:18px;color:#2d3d50;font-weight:700">Aug 29</span><svg width="15.5" height="17" viewBox="3 2 18 20" style="margin-left:15px;flex:none" fill="none" stroke="#5b6b80" stroke-width="2" stroke-linecap="round" stroke-linejoin="round"><circle cx="12" cy="8" r="5"/><path d="M20 21a8 8 0 0 0 -16 0"/></svg><span style="margin-left:9.5px;font-size:18px;color:#5f6f84">Yousef</span></div>
<div class="a" style="left:1784px;top:601.0px;width:701px;height:1.5px;background:#e3e8ef"></div>
<div class="a" style="left:1802px;top:617.5px;width:26px;height:26px;border:2.2px solid #1f2d3d;border-radius:50%;box-shadow:0 1px 2px rgba(0,0,0,0.12)"></div>
<div class="a" style="left:1841px;top:619.2px;display:flex;align-items:flex-start;line-height:1;white-space:nowrap"><span style="font-size:20.6px;letter-spacing:0.45px;color:#0a8daa;-webkit-text-stroke:0.4px #0a8daa">Send marketing email</span></div>
<div class="a" style="left:1841px;top:646.0px;display:flex;align-items:flex-start;line-height:1;white-space:nowrap"><span style="font-size:18px;letter-spacing:0.3px;color:#5f6f84">Session: Practical Artificial Intelligence, 25 Aug 2025</span><svg width="18" height="18" viewBox="3 3 18 18" style="margin-left:13px;position:relative;top:-2px;flex:none" fill="none" stroke="#1591b0" stroke-width="2" stroke-linecap="round" stroke-linejoin="round"><path d="M12 6h-6a2 2 0 0 0 -2 2v10a2 2 0 0 0 2 2h10a2 2 0 0 0 2 -2v-6"/><path d="M11 13l9 -9"/><path d="M15 4h5v5"/></svg></div>
<div class="a" style="left:1841.5px;top:672.8px;height:24px;display:flex;align-items:center;line-height:1;white-space:nowrap"><svg width="17" height="15" viewBox="0 0 17 15" style="flex:none;position:relative;top:-1px"><rect x="0.5" y="8" width="4" height="7" rx="1" fill="#566579"/><rect x="6.3" y="4.5" width="4" height="10.5" rx="1" fill="#566579"/><rect x="12.1" y="0.5" width="4" height="14.5" rx="1" fill="#cfd5dd"/></svg><span style="margin-left:9px;font-size:18px;color:#5f6f84">Medium</span><svg width="19" height="19" viewBox="2.5 2 20 20" style="margin-left:14px;flex:none" fill="none" stroke="#f4573a" stroke-width="1.8" stroke-linecap="round" stroke-linejoin="round"><path d="M13 21h-7a2 2 0 0 1 -2 -2v-12a2 2 0 0 1 2 -2h12a2 2 0 0 1 2 2v6.5"/><path d="M16 3v4"/><path d="M8 3v4"/><path d="M4 11h16"/><path d="M18 18l4 4M22 18l-4 4"/></svg><span style="margin-left:7px;font-size:18px;color:#2d3d50;font-weight:700">Aug 29</span><svg width="15.5" height="17" viewBox="3 2 18 20" style="margin-left:15px;flex:none" fill="none" stroke="#5b6b80" stroke-width="2" stroke-linecap="round" stroke-linejoin="round"><circle cx="12" cy="8" r="5"/><path d="M20 21a8 8 0 0 0 -16 0"/></svg><span style="margin-left:9.5px;font-size:18px;color:#5f6f84">Yousef</span></div>
<div class="a" style="left:1784px;top:707.5px;width:701px;height:1.5px;background:#e3e8ef"></div>
<div class="a" style="left:1784px;top:708.5px;width:701px;height:43px;background:#f8f9fb"></div>
<div class="t" style="left:1802.3px;top:722.6px;font-size:17.6px;color:#9aa6b6;font-weight:400;-webkit-text-stroke:0.35px #9aa6b6;letter-spacing:0.4px">No due date</div>
<div class="a" style="left:1784px;top:751px;width:701px;height:1px;background:#eef1f5"></div>
<div class="a" style="left:1783px;top:792px;width:703px;height:800px;background:#fff;border:1.5px solid #e2e8f0;border-radius:6px;box-shadow:0 1px 2px rgba(100,116,139,0.12)"></div>
<div class="t" style="left:1802.3px;top:813.4px;font-size:19.9px;color:#2d3d50;font-weight:400;-webkit-text-stroke:0.35px #2d3d50;">Orders</div>
<div class="a" style="left:2261px;top:805.3px;width:205px;height:34px;background:#fff;border:1.5px solid #e3e8ef;border-radius:7px;box-shadow:0 1px 2px rgba(30,41,59,0.06)"></div>
<div class="t" style="left:2280.5px;top:813.6px;font-size:19.5px;color:#2d3d50;font-weight:400;">Outstanding</div>
<svg class="a" style="left:2431px;top:814.8px;" width="11" height="16" viewBox="0 0 11 16"><path d="M1.5 5.5 L5.5 1.5 L9.5 5.5 M1.5 10.5 L5.5 14.5 L9.5 10.5" fill="none" stroke="#7a8799" stroke-width="1.5" stroke-linecap="round" stroke-linejoin="round"/></svg>
<div class="a" style="left:1784px;top:851px;width:701px;height:1.5px;background:#e3e8ef"></div>
<div class="a" style="left:1701px;width:500px;top:880.6px;height:16.3px;display:flex;justify-content:center;align-items:center;white-space:nowrap;line-height:1"><span style="font-size:16.3px;letter-spacing:0px;color:#2d3d50;-webkit-text-stroke:0.45px #2d3d50">OUTSTANDING AMOUNT</span><svg width="22" height="22" viewBox="0 0 24 24" style="margin-left:8px;position:relative;top:-0.5px;flex:none" fill="none" stroke="#56667b" stroke-width="1.8" stroke-linecap="round" stroke-linejoin="round"><circle cx="12" cy="12" r="10.8"/><path d="M12 17.3v.01" stroke-width="2.4"/><path d="M12 13.9a1.9 1.9 0 0 1 0.9 -1.7a3 3 0 1 0 -3.6 -4.4"/></svg></div>
<div class="t" style="left:1751.0px;width:400px;text-align:center;top:913.4px;font-size:29.5px;color:#0a8daa;font-weight:700;">$ 57.2K</div>
<div class="t" style="left:1751.0px;width:400px;text-align:center;top:956.0px;font-size:19px;color:#5f6f84;font-weight:400;">37 Orders</div>
<div class="a" style="left:2066px;width:500px;top:880.6px;height:16.3px;display:flex;justify-content:center;align-items:center;white-space:nowrap;line-height:1"><span style="font-size:16.3px;letter-spacing:0px;color:#2d3d50;-webkit-text-stroke:0.45px #2d3d50">OVERDUE COUNT</span><svg width="22" height="22" viewBox="0 0 24 24" style="margin-left:8px;position:relative;top:-0.5px;flex:none" fill="none" stroke="#56667b" stroke-width="1.8" stroke-linecap="round" stroke-linejoin="round"><circle cx="12" cy="12" r="10.8"/><path d="M12 17.3v.01" stroke-width="2.4"/><path d="M12 13.9a1.9 1.9 0 0 1 0.9 -1.7a3 3 0 1 0 -3.6 -4.4"/></svg></div>
<div class="t" style="left:2116.0px;width:400px;text-align:center;top:913.4px;font-size:29.5px;color:#0a8daa;font-weight:700;">11</div>
<div class="t" style="left:2116.0px;width:400px;text-align:center;top:956.0px;font-size:19px;color:#5f6f84;font-weight:400;">Orders</div>
<div class="a" style="left:1784px;top:1000.5px;width:701px;height:1.5px;background:#e3e8ef"></div>
<div class="t" style="left:1802.0px;top:1030.6px;font-size:19.6px;color:#0a8daa;font-weight:400;-webkit-text-stroke:0.45px #0a8daa;letter-spacing:0.55px">Order #INV-321</div>
<div class="a" style="right:38.80000000000018px;top:1031.1px;line-height:1;white-space:nowrap"><span style="font-size:17.3px;color:#5f6f84">USD </span><span style="font-size:19px;color:#2d3d50;font-weight:700">1,292.40</span></div>
<div class="a" style="left:1803.8px;top:1061.0px;height:24px;display:flex;align-items:center;line-height:1;white-space:nowrap"><svg width="15.5" height="17" viewBox="3 2 18 20" style="flex:none" fill="none" stroke="#5b6b80" stroke-width="2" stroke-linecap="round" stroke-linejoin="round"><circle cx="12" cy="8" r="5"/><path d="M20 21a8 8 0 0 0 -16 0"/></svg><span style="margin-left:8.5px;font-size:18px;color:#5f6f84">Lester Harber</span><svg width="19" height="19" viewBox="2.5 2 20 20" style="margin-left:13px;flex:none" fill="none" stroke="#f4573a" stroke-width="1.8" stroke-linecap="round" stroke-linejoin="round"><path d="M13 21h-7a2 2 0 0 1 -2 -2v-12a2 2 0 0 1 2 -2h12a2 2 0 0 1 2 2v6.5"/><path d="M16 3v4"/><path d="M8 3v4"/><path d="M4 11h16"/><path d="M18 18l4 4M22 18l-4 4"/></svg><span style="margin-left:7px;font-size:18px;color:#2d3d50;font-weight:700">Aug 8</span></div>
<div class="a" style="left:1784px;top:1095.7px;width:701px;height:1.5px;background:#e3e8ef"></div>
<div class="t" style="left:1802.0px;top:1113.7px;font-size:19.6px;color:#0a8daa;font-weight:400;-webkit-text-stroke:0.45px #0a8daa;letter-spacing:0.55px">Order #INV-191</div>
<div class="a" style="right:38.80000000000018px;top:1114.2px;line-height:1;white-space:nowrap"><span style="font-size:17.3px;color:#5f6f84">USD </span><span style="font-size:19px;color:#2d3d50;font-weight:700">1,299.60</span></div>
<div class="a" style="left:1803.8px;top:1144.1px;height:24px;display:flex;align-items:center;line-height:1;white-space:nowrap"><svg width="15.5" height="17" viewBox="3 2 18 20" style="flex:none" fill="none" stroke="#5b6b80" stroke-width="2" stroke-linecap="round" stroke-linejoin="round"><circle cx="12" cy="8" r="5"/><path d="M20 21a8 8 0 0 0 -16 0"/></svg><span style="margin-left:8.5px;font-size:18px;color:#5f6f84">Bill Boehm</span><svg width="19" height="19" viewBox="2.5 2 20 20" style="margin-left:13px;flex:none" fill="none" stroke="#f4573a" stroke-width="1.8" stroke-linecap="round" stroke-linejoin="round"><path d="M13 21h-7a2 2 0 0 1 -2 -2v-12a2 2 0 0 1 2 -2h12a2 2 0 0 1 2 2v6.5"/><path d="M16 3v4"/><path d="M8 3v4"/><path d="M4 11h16"/><path d="M18 18l4 4M22 18l-4 4"/></svg><span style="margin-left:7px;font-size:18px;color:#2d3d50;font-weight:700">Aug 10</span></div>
<div class="a" style="left:1784px;top:1178.8px;width:701px;height:1.5px;background:#e3e8ef"></div>
<div class="t" style="left:1802.0px;top:1196.8px;font-size:19.6px;color:#0a8daa;font-weight:400;-webkit-text-stroke:0.45px #0a8daa;letter-spacing:0.55px">Order #INV-381</div>
<div class="a" style="right:38.80000000000018px;top:1197.3px;line-height:1;white-space:nowrap"><span style="font-size:17.3px;color:#5f6f84">USD </span><span style="font-size:19px;color:#2d3d50;font-weight:700">1,292.40</span></div>
<div class="a" style="left:1803.8px;top:1227.2px;height:24px;display:flex;align-items:center;line-height:1;white-space:nowrap"><svg width="15.5" height="17" viewBox="3 2 18 20" style="flex:none" fill="none" stroke="#5b6b80" stroke-width="2" stroke-linecap="round" stroke-linejoin="round"><circle cx="12" cy="8" r="5"/><path d="M20 21a8 8 0 0 0 -16 0"/></svg><span style="margin-left:8.5px;font-size:18px;color:#5f6f84">Freddie Ullrich-Batz</span><svg width="19" height="19" viewBox="2.5 2 20 20" style="margin-left:13px;flex:none" fill="none" stroke="#f4573a" stroke-width="1.8" stroke-linecap="round" stroke-linejoin="round"><path d="M13 21h-7a2 2 0 0 1 -2 -2v-12a2 2 0 0 1 2 -2h12a2 2 0 0 1 2 2v6.5"/><path d="M16 3v4"/><path d="M8 3v4"/><path d="M4 11h16"/><path d="M18 18l4 4M22 18l-4 4"/></svg><span style="margin-left:7px;font-size:18px;color:#2d3d50;font-weight:700">Aug 18</span></div>
<div class="a" style="left:1784px;top:1261.8999999999999px;width:701px;height:1.5px;background:#e3e8ef"></div>
<div class="t" style="left:1802.0px;top:1279.9px;font-size:19.6px;color:#0a8daa;font-weight:400;-webkit-text-stroke:0.45px #0a8daa;letter-spacing:0.55px">Order #INV-256</div>
<div class="a" style="right:38.80000000000018px;top:1280.4px;line-height:1;white-space:nowrap"><span style="font-size:17.3px;color:#5f6f84">USD </span><span style="font-size:19px;color:#2d3d50;font-weight:700">1,299.60</span></div>
<div class="a" style="left:1803.8px;top:1310.3px;height:24px;display:flex;align-items:center;line-height:1;white-space:nowrap"><svg width="15.5" height="17" viewBox="3 2 18 20" style="flex:none" fill="none" stroke="#5b6b80" stroke-width="2" stroke-linecap="round" stroke-linejoin="round"><circle cx="12" cy="8" r="5"/><path d="M20 21a8 8 0 0 0 -16 0"/></svg><span style="margin-left:8.5px;font-size:18px;color:#5f6f84">Madeline Goyette</span><svg width="19" height="19" viewBox="2.5 2 20 20" style="margin-left:13px;flex:none" fill="none" stroke="#f4573a" stroke-width="1.8" stroke-linecap="round" stroke-linejoin="round"><path d="M13 21h-7a2 2 0 0 1 -2 -2v-12a2 2 0 0 1 2 -2h12a2 2 0 0 1 2 2v6.5"/><path d="M16 3v4"/><path d="M8 3v4"/><path d="M4 11h16"/><path d="M18 18l4 4M22 18l-4 4"/></svg><span style="margin-left:7px;font-size:18px;color:#2d3d50;font-weight:700">Aug 26</span></div>
<div class="a" style="left:1784px;top:1345.0px;width:701px;height:1.5px;background:#e3e8ef"></div>
<div class="t" style="left:1802.0px;top:1363.0px;font-size:19.6px;color:#0a8daa;font-weight:400;-webkit-text-stroke:0.45px #0a8daa;letter-spacing:0.55px">Order #INV-121</div>
<div class="a" style="right:38.80000000000018px;top:1363.5px;line-height:1;white-space:nowrap"><span style="font-size:17.3px;color:#5f6f84">USD </span><span style="font-size:19px;color:#2d3d50;font-weight:700">1,642.80</span></div>
<div class="a" style="left:1803.8px;top:1393.4px;height:24px;display:flex;align-items:center;line-height:1;white-space:nowrap"><svg width="15.5" height="17" viewBox="3 2 18 20" style="flex:none" fill="none" stroke="#5b6b80" stroke-width="2" stroke-linecap="round" stroke-linejoin="round"><circle cx="12" cy="8" r="5"/><path d="M20 21a8 8 0 0 0 -16 0"/></svg><span style="margin-left:8.5px;font-size:18px;color:#5f6f84">Tyrone Smitham</span><svg width="19" height="19" viewBox="2.5 2 20 20" style="margin-left:13px;flex:none" fill="none" stroke="#f4573a" stroke-width="1.8" stroke-linecap="round" stroke-linejoin="round"><path d="M13 21h-7a2 2 0 0 1 -2 -2v-12a2 2 0 0 1 2 -2h12a2 2 0 0 1 2 2v6.5"/><path d="M16 3v4"/><path d="M8 3v4"/><path d="M4 11h16"/><path d="M18 18l4 4M22 18l-4 4"/></svg><span style="margin-left:7px;font-size:18px;color:#2d3d50;font-weight:700">Aug 26</span></div>
<div class="a" style="left:1784px;top:1428.1px;width:701px;height:1.5px;background:#e3e8ef"></div>
<div class="t" style="left:1802.0px;top:1446.1px;font-size:19.6px;color:#0a8daa;font-weight:400;-webkit-text-stroke:0.45px #0a8daa;letter-spacing:0.55px">Order #INV-134</div>
<div class="a" style="right:38.80000000000018px;top:1446.6px;line-height:1;white-space:nowrap"><span style="font-size:17.3px;color:#5f6f84">USD </span><span style="font-size:19px;color:#2d3d50;font-weight:700">1,292.40</span></div>
<div class="a" style="left:1803.8px;top:1476.5px;height:24px;display:flex;align-items:center;line-height:1;white-space:nowrap"><svg width="15.5" height="17" viewBox="3 2 18 20" style="flex:none" fill="none" stroke="#5b6b80" stroke-width="2" stroke-linecap="round" stroke-linejoin="round"><circle cx="12" cy="8" r="5"/><path d="M20 21a8 8 0 0 0 -16 0"/></svg><span style="margin-left:8.5px;font-size:18px;color:#5f6f84">Nichole Kassulke</span><svg width="19" height="19" viewBox="2.5 2 20 20" style="margin-left:13px;flex:none" fill="none" stroke="#f4573a" stroke-width="1.8" stroke-linecap="round" stroke-linejoin="round"><path d="M13 21h-7a2 2 0 0 1 -2 -2v-12a2 2 0 0 1 2 -2h12a2 2 0 0 1 2 2v6.5"/><path d="M16 3v4"/><path d="M8 3v4"/><path d="M4 11h16"/><path d="M18 18l4 4M22 18l-4 4"/></svg><span style="margin-left:7px;font-size:18px;color:#2d3d50;font-weight:700">Sep 2</span></div>
<div class="a" style="left:1784px;top:1511.1999999999998px;width:701px;height:1.5px;background:#e3e8ef"></div>
<div class="t" style="left:1802.0px;top:1529.2px;font-size:19.6px;color:#0a8daa;font-weight:400;-webkit-text-stroke:0.45px #0a8daa;letter-spacing:0.55px">Order #INV-387</div>
<div class="a" style="right:38.80000000000018px;top:1529.7px;line-height:1;white-space:nowrap"><span style="font-size:17.3px;color:#5f6f84">USD </span><span style="font-size:19px;color:#2d3d50;font-weight:700">1,789.20</span></div>
<div class="a" style="left:1803.8px;top:1559.6px;height:24px;display:flex;align-items:center;line-height:1;white-space:nowrap"><svg width="15.5" height="17" viewBox="3 2 18 20" style="flex:none" fill="none" stroke="#5b6b80" stroke-width="2" stroke-linecap="round" stroke-linejoin="round"><circle cx="12" cy="8" r="5"/><path d="M20 21a8 8 0 0 0 -16 0"/></svg><span style="margin-left:8.5px;font-size:18px;color:#5f6f84">Ruth Bogan</span><svg width="19" height="19" viewBox="2.5 2 20 20" style="margin-left:13px;flex:none" fill="none" stroke="#f4573a" stroke-width="1.8" stroke-linecap="round" stroke-linejoin="round"><path d="M13 21h-7a2 2 0 0 1 -2 -2v-12a2 2 0 0 1 2 -2h12a2 2 0 0 1 2 2v6.5"/><path d="M16 3v4"/><path d="M8 3v4"/><path d="M4 11h16"/><path d="M18 18l4 4M22 18l-4 4"/></svg><span style="margin-left:7px;font-size:18px;color:#2d3d50;font-weight:700">Sep 4</span></div>
<div class="a" style="left:1784px;top:1594.3px;width:701px;height:1.5px;background:#e3e8ef"></div></body></html>
